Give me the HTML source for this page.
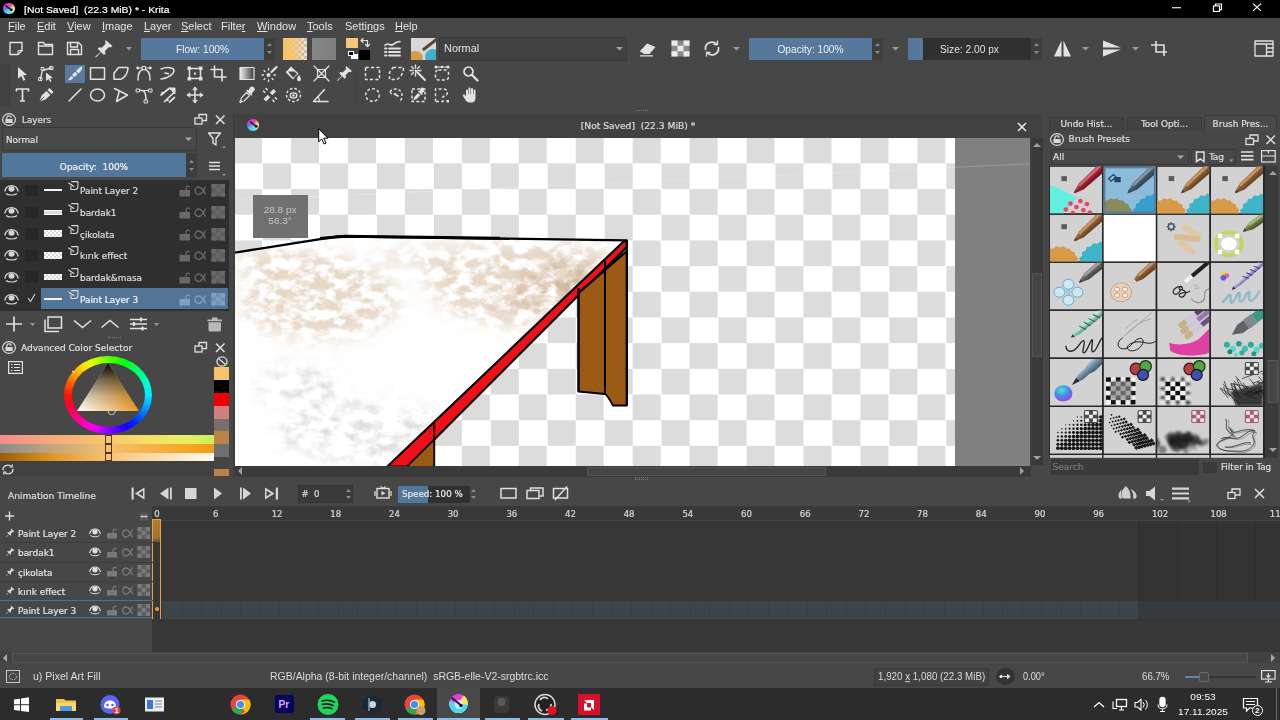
<!DOCTYPE html>
<html lang="en">
<head>
<meta charset="utf-8">
<title>[Not Saved] (22.3 MiB) * - Krita</title>
<style>
*{box-sizing:border-box;margin:0;padding:0}
html,body{width:1280px;height:720px;overflow:hidden;background:#474747}
body{position:relative;font-family:"Liberation Sans",sans-serif;font-size:11px;color:#dedede}
.abs,.abs>*{position:absolute}
.a{position:absolute}
.dj{font-family:"DejaVu Sans","Liberation Sans",sans-serif}
.dc{font-family:"DejaVu Sans Condensed","DejaVu Sans","Liberation Sans",sans-serif;-webkit-text-stroke:.25px}
svg{position:absolute;overflow:visible}
.t{position:absolute;white-space:nowrap;line-height:1}
#titlebar{left:0;top:0;width:1280px;height:18px;background:#000}
#menubar{left:0;top:18px;width:1280px;height:18px;background:#474747}
#menubar span{position:absolute;top:2px;font-size:11.5px;color:#e4e4e4;white-space:nowrap;transform-origin:0 0;transform:scaleX(.955)}
.slider{background:#55789c;border-radius:1px}
.dark{background:#2f2f2f}
</style>
</head>
<body>
<!-- ===== TITLE BAR ===== -->
<div id="titlebar" class="a">
  <div class="a" style="left:3px;top:3.200px;width:11.500px;height:11.200px;border-radius:50%;background:conic-gradient(from -60deg,#e040d0,#f040c0 25%,#f8e860 38%,#f0f0a0 48%,#60e8f0 60%,#40c8f0 80%,#8060e0 92%,#e040d0)"></div><svg style="left:3px;top:3.200px" width="12" height="12"><path d="M2.500 2.500l6 4.500" stroke="#28204c" stroke-width="1.700"/><circle cx="8.400" cy="6.800" r="1.400" fill="#181830"/></svg>
  <div class="t" style="left:24px;top:4.500px;font-size:10.400px;color:#fff;-webkit-text-stroke:.2px;transform-origin:0 0;transform:scaleY(.96)">[Not Saved]&nbsp; (22.3 MiB) * - Krita</div>
  <svg style="left:1170px;top:-.9px;transform-origin:0 0;transform:scaleY(.92)" width="100" height="18" viewBox="0 0 100 18" fill="none" stroke="#fff" stroke-width="1.2"><path d="M2 9.5h9"/><rect x="43.500" y="7.500" width="6" height="6"/><path d="M45.500 7.500v-2h6v6h-2"/><path d="M83 5l8 8M91 5l-8 8"/></svg>
</div>
<!-- ===== MENU BAR ===== -->
<div id="menubar" class="a">
  <span style="left:8px"><u>F</u>ile</span><span style="left:37px"><u>E</u>dit</span><span style="left:67px"><u>V</u>iew</span><span style="left:102px"><u>I</u>mage</span><span style="left:144px"><u>L</u>ayer</span><span style="left:181px"><u>S</u>elect</span><span style="left:221px">Filte<u>r</u></span><span style="left:257px"><u>W</u>indow</span><span style="left:307px"><u>T</u>ools</span><span style="left:345px">Setti<u>n</u>gs</span><span style="left:395px"><u>H</u>elp</span>
</div>
<!-- TOOLBAR -->
<div id="toolbar" class="a" style="left:0;top:36px;width:1280px;height:74px">
  <!-- sliders / boxes row 1 -->
  <div class="a slider" style="left:141px;top:2px;width:123px;height:22px"></div>
  <div class="t" style="left:141px;top:8px;width:123px;text-align:center;font-size:11.5px;color:#f0f0f0;transform:scaleX(.885)">Flow: 100%</div>
  <div class="a" style="left:264px;top:2px;width:11px;height:22px;background:#3e3e3e"></div>
  <div class="a" style="left:283px;top:2px;width:24px;height:22px;background:#ececec;background-image:conic-gradient(#bdbdbd 25%,#0000 0 50%,#bdbdbd 0 75%,#0000 0);background-size:6px 6px;"></div>
  <div class="a" style="left:283px;top:2px;width:24px;height:22px;background:linear-gradient(90deg,#f5c46c 28%,#f5c46caa 60%,#f5c46c22)"></div>
  <div class="a" style="left:312px;top:2px;width:24px;height:22px;background:linear-gradient(90deg,#868686,#7e7e7e)"></div>
  <div class="a" style="left:358.500px;top:13.500px;width:11.500px;height:10px;background:#000"></div>
  <div class="a" style="left:346px;top:1.500px;width:11.500px;height:10.500px;background:#f6c674"></div>
  <div class="a" style="left:351px;top:17.500px;width:6.500px;height:5.500px;background:#fff"></div>
  <div class="a" style="left:347.500px;top:14.500px;width:6.500px;height:5.500px;background:#000;border:1px solid #fff"></div>
  <div class="a" style="left:411px;top:2px;width:25px;height:22px;background:#d8d8d8;overflow:hidden"><div class="a" style="left:-4px;top:13px;width:16px;height:14px;border-radius:50%;background:#d99a4c"></div><div class="a" style="left:14px;top:11px;width:16px;height:16px;border-radius:50%;background:#3fb1cf"></div><div class="a" style="left:10px;top:5px;width:18px;height:3px;background:#5a4630;transform:rotate(-38deg)"></div></div>
  <div class="a" style="left:439px;top:1px;width:188px;height:24px;background:#414141;border:1px solid #383838;border-radius:2px"></div>
  <div class="t" style="left:444px;top:7px;font-size:11.5px;color:#e4e4e4;transform-origin:0 0;transform:scaleX(.95)">Normal</div>
  <div class="a slider" style="left:749px;top:2px;width:123px;height:22px"></div>
  <div class="t" style="left:749px;top:8px;width:123px;text-align:center;font-size:11.5px;color:#f0f0f0;transform:scaleX(.885)">Opacity: 100%</div>
  <div class="a" style="left:872px;top:2px;width:11px;height:22px;background:#3e3e3e"></div>
  <div class="a" style="left:908px;top:2px;width:123px;height:22px;background:#303030"></div>
  <div class="a slider" style="left:908px;top:2px;width:15px;height:22px"></div>
  <div class="t" style="left:908px;top:8px;width:123px;text-align:center;font-size:11.5px;color:#e0e0e0;transform:scaleX(.885)">Size: 2.00 px</div>
  <div class="a" style="left:1031px;top:2px;width:11px;height:22px;background:#3e3e3e"></div>
  <!-- selected tool bg -->
  <div class="a" style="left:65px;top:29px;width:20px;height:18px;background:#5a7a9c"></div>
  <!-- grip -->
  <div class="a" style="left:0;top:28px;width:10px;height:42px;background:#424242;border-right:1px solid #3c3c3c"></div>
  <div class="a" style="left:355px;top:30px;width:1px;height:40px;background:#404040"></div>
  <svg id="tbicons" style="left:0;top:0" width="1280" height="74" viewBox="0 36 1280 74" fill="none" stroke="#e2e2e2" stroke-width="1.4" stroke-linecap="round" stroke-linejoin="round">
<defs><linearGradient id="gtool"><stop offset="0" stop-color="#f0f0f0"/><stop offset="1" stop-color="#3a3a3a"/></linearGradient></defs>
<!-- row1 -->
<g transform="translate(16,48.500)"><path d="M-6-6h12v8l-4 4h-8z"/><path d="M6 2h-4v4" stroke-width="1"/></g>
<g transform="translate(45.500,48.500)"><path d="M-7 6v-12h5l1.500 2h7.500v10z"/><path d="M-7-2.500h14" /></g>
<g transform="translate(74.500,48.500)"><path d="M-7-6h11l3 3v9h-14z"/><path d="M-4-6v4.500h7v-4.500M-4 6v-5h8v5"/></g>
<g transform="translate(104.500,48)" stroke="none" fill="#e2e2e2"><path d="M1-8l7 6-2 1.500-1.500-.5-4 4 .5 2.500-1.500 1.500-3-3-5 5.500-.8-.8 5.500-5-3-3 1.500-1.500 2.500.5 4-4-.5-1.500z"/></g>
<path d="M126 47h6l-3 3.500z" fill="#9a9a9a" stroke="none"/>
<!-- spin arrows -->
<g fill="#8c8c8c" stroke="none"><path d="M267 46l2.500-3 2.500 3zM267 51l2.500 3 2.500-3z"/><path d="M875 46l2.500-3 2.500 3zM875 51l2.500 3 2.500-3z"/><path d="M1034 46l2.500-3 2.500 3zM1034 51l2.500 3 2.500-3z"/></g>
<!-- swap arrows near fg/bg -->
<path d="M361 40.500h6.500v6M361 40.500l2-2M361 40.500l2 2M367.500 46.500l-2-2M367.500 46.500l2-2" stroke-width="1.200"/>
<!-- brush settings -->
<g transform="translate(393,48.500)"><path d="M-8-3c3-4 5 1 8-1s4-3 7-3" stroke-width="1.600"/><path d="M-4 0h11M-4 3.500h11M-4 7h11" stroke-width="1.800"/><path d="M-8 0h1.500M-8 3.500h1.500M-8 7h1.500" stroke-width="1.800"/></g>
<path d="M616 47h7l-3.500 3.500z" fill="#a0a0a0" stroke="none"/>
<!-- row1 right -->
<g transform="translate(647.500,49)" fill="#e2e2e2" stroke="none"><path d="M-8 2.500l7.500-8 8.500 3.500-6 7h-6z"/><path d="M-7 6.800h12" stroke="#e2e2e2" stroke-width="1.200"/><path d="M-8 2.500l4 2.500" stroke="#474747" stroke-width=".8"/></g>
<g transform="translate(680.500,48.500)" stroke="none"><rect x="-9" y="-8" width="18" height="16" fill="#8a8a8a"/><path d="M-9-8h6v5.300h-6zM3-8h6v5.300h-6zM-3-2.700h6v5.400h-6zM-9 2.700h6v5.300h-6zM3 2.700h6v5.300h-6z" fill="#ececec"/></g>
<g transform="translate(712,48.500)" stroke-width="1.700"><path d="M-6.500 1a6.500 6.500 0 0 1 11-5.500"/><path d="M6.500-1a6.500 6.500 0 0 1-11 5.500"/><path d="M5.500-7.500v3.500h-3.500M-5.500 7.500v-3.500h3.500" stroke-width="1.300"/></g>
<g fill="#9a9a9a" stroke="none"><path d="M733 47h7l-3.500 3.500zM892 47h7l-3.500 3.500zM1082 47h7l-3.500 3.500zM1132 47h7l-3.500 3.500z"/></g>
<g transform="translate(1062.500,48.500)" fill="#e2e2e2" stroke="none"><path d="M-1-8v16h-7.500zM1-8v16h7.500z"/></g>
<g transform="translate(1112,48.500)" fill="#e2e2e2" stroke="none"><path d="M-9-8l18 7h-18zM-9 8l18-7h-18z" /></g>
<g transform="translate(1159,48.500)" stroke-width="1.600" stroke-linecap="butt"><path d="M-8-3.500h13v11M-3-7.500v11h11"/></g>
<g transform="translate(1264,48.500)" stroke-width="1.300"><rect x="-9" y="-7.500" width="18" height="15"/><path d="M-9-4.500h18M2.500-4.500v12M2.500-.5h6.500M2.500 3.500h6.500" /></g>
<!-- ROW 2 -->
<g transform="translate(22.500,73.500)" fill="#e2e2e2" stroke="none"><path d="M-4.500-6.500l9 8-4 .3 2.300 4.500-1.800.9-2.300-4.600-3.200 2.700z"/></g>
<g transform="translate(46,73.500)"><path d="M-5.500 5.500l1.800-8.500l9-2.500" stroke-width="1.300"/><rect x="-7" y="4" width="3" height="3" stroke-width="1"/><rect x="4" y="-7" width="3" height="3" stroke-width="1"/><rect x="-4.500" y="-6" width="2.500" height="2.500" stroke-width="1"/><path d="M0-1l7 5.500-3 .3 1.500 3-1.400.7-1.500-3-2.600 2z" fill="#e2e2e2" stroke="none"/></g>
<g transform="translate(75,73.500)" fill="#dbe6ef" stroke="none"><path d="M7-7c1 1.500-1 5-3.500 7l-2.500-2.500c2-2.500 5-5 6-4.500z"/><path d="M.2-1.700l2.300 2.300c-1 1.500-2.500 2.500-3.500 3l-1.800-1.800c.5-1.200 1.800-2.700 3-3.500z"/><path d="M-3.500 2.500l1.800 1.800c-1 2-3.800 2.700-5.800 2.500 1.500-.8 2-2.800 4-4.300z"/></g>
<g transform="translate(97.500,73.500)"><rect x="-7" y="-5.700" width="14" height="11.500" stroke-width="1.500"/></g>
<g transform="translate(121,73.500)"><path d="M-2.500-6h9.500c0 5-2 9-7 11.800h-7v-6z" stroke-width="1.500"/></g>
<g transform="translate(144,73.500)"><path d="M-6 6.500c0-6 2-10.500 6-10.500s6 4.500 6 10.500" stroke-width="1.500"/><path d="M-5.500-5.500h11" stroke-width="1"/><rect x="-1.500" y="-7" width="3" height="3" fill="#474747" stroke-width="1"/><rect x="-7.500" y="-6.800" width="2.500" height="2.500" fill="#e2e2e2" stroke="none"/><rect x="5" y="-6.800" width="2.500" height="2.500" fill="#e2e2e2" stroke="none"/></g>
<g transform="translate(167.500,73.500)"><path d="M-6.500-4.500c7-3 13-1 13 1.500 0 3.500-6 8-13 8.500" stroke-width="1.500"/><path d="M-2.500-.5l3.500.8" stroke-width="1.500"/></g>
<g transform="translate(195,73.500)"><rect x="-5.500" y="-5" width="11" height="10" stroke-width="1.500"/><g fill="#e2e2e2" stroke="none"><rect x="-7.500" y="-7" width="3.500" height="3.500"/><rect x="4" y="-7" width="3.500" height="3.500"/><rect x="-7.500" y="3.500" width="3.500" height="3.500"/><rect x="4" y="3.500" width="3.500" height="3.500"/><rect x="-1" y="-1" width="2" height="2"/></g></g>
<g transform="translate(218.500,73.500)" stroke-linecap="butt"><path d="M-4-8v11.500h12M-8-4h11.500v12" stroke-width="1.600"/></g>
<g transform="translate(247,73.500)"><rect x="-7" y="-6" width="14" height="12" stroke-width="1.200" fill="url(#gtool)"/></g>
<g transform="translate(270,73.500)" stroke-width="1.300"><path d="M6.500-6.500l-5 5" stroke-width="2.200"/><circle cx="-1.500" cy="1.500" r="2" fill="#e2e2e2" stroke="none"/><path d="M-1.500-5v1.500M-1.500 6.500v1.500M-8 1.500h1.500M4 1.500h1.500M-6-3l1 1M3 6l-1-1M-6 6l1-1" stroke-dasharray="1.500 1.200"/></g>
<g transform="translate(293,73.500)" fill="#e2e2e2" stroke="none"><path d="M-2-7l7.500 7-5.500 5.500-7-7z"/><path d="M-5-2l6.500 0 2.500 2.500-4 4z" fill="#474747"/><path d="M6 1c1 2 2 3.500 2 4.700a2 2 0 0 1-4 0c0-1.200 1-2.700 2-4.700z"/><path d="M-6.500-1.500l6.500 6.500" stroke="#e2e2e2"/></g>
<g transform="translate(321.500,73.500)" stroke-width="1.200"><rect x="-4" y="-4" width="8" height="8"/><path d="M-7.500-7.500l3.500 3.500M7.500-7.500l-3.500 3.500M-7.500 7.500l3.500-3.500M7.500 7.500l-3.500-3.500M-3-3l6 6M3-3l-6 6"/></g>
<g transform="translate(345,73)" stroke="none" fill="#e2e2e2"><path d="M1-7l6 5-1.700 1.300-1.300-.5-3.500 3.500.5 2.200-1.300 1.300-2.600-2.600-4.400 4.800-.7-.7 4.800-4.400-2.600-2.600 1.300-1.300 2.200.5 3.500-3.500-.5-1.300z"/></g>
<g transform="translate(372.500,73.500)"><rect x="-7" y="-6" width="14" height="12" stroke-width="1.500" stroke-dasharray="3.200 2.200" stroke-linecap="butt"/></g>
<g transform="translate(396.500,73.500)"><path d="M-3.500-6h10.500c0 5-2 9-6.500 12h-7.500v-7z" stroke-width="1.500" stroke-dasharray="3.200 2.200" stroke-linecap="butt"/></g>
<g transform="translate(418.500,73.500)" stroke-width="1.400"><path d="M-3-3l9.500 9.500" stroke-width="2"/><path d="M-3-8.500v3M-3 2.500v-3M-8.500-3h3M2.500-3h-3M-7-7l2 2M1-7l-2 2M-7 1l2-2"/></g>
<g transform="translate(442,73.500)"><rect x="-6.500" y="-3.500" width="13" height="10" rx="3" stroke-width="1.500" stroke-dasharray="3 2.200" stroke-linecap="butt"/><path d="M-6-6.500h12" stroke-width="1"/><g fill="#e2e2e2" stroke="none"><circle cx="-6" cy="-6.500" r="1.600"/><circle cx="6" cy="-6.500" r="1.600"/><circle cx="0" cy="-6.500" r="1.300"/></g></g>
<g transform="translate(470.500,73.500)"><circle cx="-2" cy="-2" r="4.500" stroke-width="1.700"/><path d="M1.500 1.500l5.500 5.500" stroke-width="2.400"/></g>
<!-- ROW 3 -->
<g transform="translate(22.500,95)" stroke-linecap="butt"><path d="M-6-3.500v-2.500h12v2.500M0-6v12M-2.500 6h5" stroke-width="1.700"/></g>
<g transform="translate(46,95)" fill="#e2e2e2" stroke="none"><path d="M3.500-7l4 4-2 2-4-4zM.5-4l4 4-5 4.500-6 2 2-6z"/><path d="M-6.500 6.500l4.500-4.500" stroke="#474747" stroke-width="1"/></g>
<g transform="translate(75,95)"><path d="M-6 6l12-12" stroke-width="1.500"/></g>
<g transform="translate(97.500,95)"><ellipse cx="0" cy="0" rx="7" ry="6" stroke-width="1.500"/></g>
<g transform="translate(121,95)"><path d="M-6.500-6.500l13 6.500-11 6.500 2.500-9.500" stroke-width="1.500"/></g>
<g transform="translate(144,95)"><path d="M-6-4.500c6-1 8 1 8 10.500" stroke-width="1.500"/><path d="M-6-4.500h13" stroke-width="1"/><rect x="-7.500" y="-6" width="3" height="3" fill="#474747" stroke-width="1"/><rect x="5" y="-6" width="3" height="3" fill="#474747" stroke-width="1"/><rect x="0.500" y="5" width="3" height="3" fill="#474747" stroke-width="1"/></g>
<g transform="translate(167.500,95)" stroke-width="1.700"><path d="M-6.500 0l8-6.500M-3 6.500l9-8.500M2 7l5-4.500"/><path d="M2-7h5.500v5.500z" fill="#e2e2e2" stroke-width="1"/><circle cx="-5" cy="-2" r="1.200" fill="#e2e2e2" stroke="none"/><circle cx="0" cy="5" r="1.200" fill="#e2e2e2" stroke="none"/></g>
<g transform="translate(195,95)"><path d="M-7.500 0h15M0-7.500v15" stroke-width="1.500"/><path d="M-2-5.500l2-2.500 2 2.500zM-2 5.500l2 2.500 2-2.500zM-5.500-2l-2.500 2 2.500 2zM5.500-2l2.500 2-2.500 2z" fill="#e2e2e2" stroke-width=".8"/></g>
<g transform="translate(247,95)" fill="#e2e2e2" stroke="none"><path d="M3-7.500a2.500 2.500 0 0 1 4 3.500l-2.500 2.500 1 1-1.300 1.300-5-5 1.300-1.300 1 1z"/><path d="M-.5-2.500l3 3-5.500 5.500-2.500.5-1 1-.8-.8 1-1 .5-2.500z" fill="none" stroke="#e2e2e2" stroke-width="1.200"/></g>
<g transform="translate(270,95)" fill="#e2e2e2" stroke="none"><path d="M-6.500 4l10-10 2.500 2.500-10 10z"/><path d="M-6-4l2-2 10 10-2 2z" fill="#474747"/><path d="M-4-6.500l1.200 1.200M-6.500-4l1.200 1.200M4 6.500l-1.200-1.200M6.500 4l-1.200-1.200" stroke="#e2e2e2" stroke-width="1.600"/><circle cx="0" cy="0" r="1.300" fill="#474747"/></g>
<g transform="translate(293.500,95)"><ellipse cx="0" cy="0" rx="7" ry="6.500" stroke-width="1.500" stroke-dasharray="2.600 2" stroke-linecap="butt"/><ellipse cx="0" cy=".5" rx="3.300" ry="2.600" stroke-width="1.400"/><circle cx="0" cy=".5" r="1.200" fill="#e2e2e2" stroke="none"/></g>
<g transform="translate(321,95)"><path d="M-7.500 6.500h14.500M-7.500 6.500l11-12" stroke-width="1.500"/><path d="M-1.500 6a6 6 0 0 0-2-4.500" stroke-width="1.200"/></g>
<g transform="translate(372.500,95)"><ellipse cx="0" cy="0" rx="6.800" ry="6.300" stroke-width="1.500" stroke-dasharray="2.800 2.200" stroke-linecap="butt"/></g>
<g transform="translate(396.500,95)"><path d="M-6.500-3c2-4 9-4 11 0s1 8-2 9.500M-6.500-3c1 2 4 3 6 1.500" stroke-width="1.500" stroke-dasharray="2.800 2" stroke-linecap="butt"/><path d="M-2-1l3.500 2" stroke-width="1.700"/></g>
<g transform="translate(418.500,95)"><rect x="-6.500" y="-6" width="13" height="12.500" stroke-width="1.500" stroke-dasharray="3 2.200" stroke-linecap="butt"/><path d="M2-6.500a2 2 0 0 1 3.500 3l-2 2 .8.800-1 1-3.800-3.800 1-1 .8.800zM-.5-2l2.300 2.300-4 4-2 .5-.8.800-.6-.6.800-.8.500-2z" fill="#e2e2e2" stroke="none"/></g>
<g transform="translate(442,95)"><path d="M-6.500 6.500v-12.500h7.500c6 0 6 6 0 7.500v5h-7.500" stroke-width="1.500" stroke-dasharray="3 2.200" stroke-linecap="butt"/><rect x="4.500" y="5" width="2.500" height="2.500" fill="#e2e2e2" stroke="none"/></g>
<g transform="translate(470.500,95)" fill="#e2e2e2" stroke="none"><path d="M-4.500-4.500a1 1 0 0 1 2 0v3.500h.5v-5.500a1 1 0 0 1 2 0v5.500h.5v-5a1 1 0 0 1 2 0v5h.5v-3.500a1 1 0 0 1 2 0v7.500c0 3-1.500 4.500-4 4.500h-2c-2 0-3-1-4-2.500l-2.500-4a1.100 1.100 0 0 1 2-1l1 1.500z"/></g>
</svg>
</div>
<!-- LAYERS -->
<div id="layers" class="a dc" style="left:0;top:110px;width:232px;height:228px">
<svg style="left:2px;top:2.500px" width="14" height="13" viewBox="-7 -6.500 14 13" fill="none" stroke="#d8d8d8" stroke-width="1.200"><ellipse cx="0" cy="0" rx="6.400" ry="5.900"/><path d="M-2.200 -.5v-1.200a2.200 2 0 0 1 4.400 0" /><rect x="-3.600" y="-.5" width="7.200" height="4" fill="#d8d8d8" stroke="none"/></svg>
<div class="t" style="left:21.500px;top:5.500px;font-size:10px;color:#dcdcdc;transform-origin:0 0;transform:scale(.98,.88)">Layers</div>
<svg style="left:194px;top:3px" width="32" height="13" viewBox="194 113 32 13" fill="none" stroke="#e0e0e0" stroke-width="1.300"><rect x="195" y="118" width="7" height="6"/><path d="M199 118v-3.500h7.500v6h-4.500"/><path d="M216 115.500l8.500 8.500M224.500 115.500l-8.500 8.500" stroke-width="1.500"/></svg>
<div class="a" style="left:2px;top:17px;width:195px;height:24px;background:#484848;border:1px solid #3a3a3a;border-radius:2px"></div>
<div class="t" style="left:5.500px;top:26px;font-size:10px;color:#dcdcdc;transform-origin:0 0;transform:scale(.98,.88)">Normal</div>
<svg style="left:185px;top:27px" width="8" height="5"><path d="M0 .5h7l-3.500 3.500z" fill="#a8a8a8"/></svg>
<svg style="left:207px;top:21px" width="20" height="18" viewBox="207 131 20 18" fill="none" stroke="#e0e0e0" stroke-width="1.400" stroke-linejoin="round"><path d="M208.500 133h12l-4.500 5.500v6.500l-3-2v-4.500z"/><path d="M222 146.500h4l-2 2z" fill="#9a9a9a" stroke="none"/></svg>
<div class="a" style="left:2px;top:43px;width:184px;height:24px;background:#51779d"></div>
<div class="a" style="left:186px;top:43px;width:11px;height:24px;background:#3d3d3d"></div>
<svg style="left:188px;top:49px" width="8" height="14"><path d="M1 4l2.500-3 2.500 3zM1 9l2.500 3 2.500-3z" fill="#8a8a8a"/></svg>
<div class="t" style="left:2px;top:52.500px;width:184px;text-align:center;font-size:10px;color:#f0f0f0;transform-origin:50% 0;transform:scale(1,.88)">Opacity:&nbsp; 100%</div>
<svg style="left:208px;top:50px" width="20" height="16" viewBox="208 160 20 16" fill="none" stroke="#e0e0e0" stroke-width="1.600" stroke-linecap="butt"><path d="M209 162.500h11M209 166h11M209 169.500h11"/><path d="M222 174h4l-2 2z" fill="#9a9a9a" stroke="none"/></svg>
<div class="a" style="left:0;top:69.500px;width:228.500px;height:131px;background:#2f2f2f"></div>
<svg style="left:4px;top:73.3px" width="15" height="14" viewBox="-7.500 -7 15 14" fill="none" stroke="#d6d6d6" stroke-width="1.300"><path d="M-6.800 1.500c1-4 3.500-5.800 6.800-5.800s5.800 1.800 6.800 5.800" /><path d="M-5.500 3.500c2 2 9 2 11 0" stroke-width="1.100"/><ellipse cx="0" cy="-1" rx="3" ry="2.800" fill="#d6d6d6" stroke="none"/></svg>
<div class="a" style="left:25px;top:74.8px;width:12.500px;height:11.500px;background:#272727"></div>
<div class="a" style="left:44px;top:79.3px;width:18px;height:2px;background:#f4f4f4"></div>
<svg style="left:67.500px;top:71.3px" width="11" height="10" fill="none" stroke="#d8d8d8" stroke-width="1.100" stroke-linejoin="round"><path d="M3.200 .6H9.900V5.500Q9.900 8.500 7 8.500H2.900V4.800"/><path d="M.4 1.800L6.200 5.700" stroke-width="1.300"/></svg>
<div class="t" style="left:79.800px;top:77.4px;font-size:10px;color:#dcdcdc;transform-origin:0 0;transform:scale(.99,.88)">Paint Layer 2</div>
<svg style="left:179px;top:74.3px" width="48" height="13" viewBox="179 0 48 13" fill="none" stroke="#696969" stroke-width="1.300"><rect x="179.500" y="6" width="10.500" height="6.500" fill="#696969" stroke="none"/><path d="M186 6v-2a2 2 0 0 1 3.800-.8"/><path d="M205.500 2.500c-2 5-4 8-7 8a3 3.300 0 0 1 0-7.500c3 0 5 3 7 7.500" stroke-width="1.400"/><g stroke="none"><rect x="211.500" y="0" width="13.500" height="12.500" fill="#5e5e5e"/><path d="M211.500 0h4.500v4.200h-4.500zM220.500 0h4.500v4.200h-4.500zM216 4.200h4.500v4.200h-4.500zM211.500 8.400h4.500v4.100h-4.500zM220.500 8.400h4.500v4.100h-4.500z" fill="#696969"/></g></svg>
<svg style="left:4px;top:95.0px" width="15" height="14" viewBox="-7.500 -7 15 14" fill="none" stroke="#d6d6d6" stroke-width="1.300"><path d="M-6.800 1.500c1-4 3.500-5.800 6.800-5.800s5.800 1.800 6.800 5.800" /><path d="M-5.500 3.500c2 2 9 2 11 0" stroke-width="1.100"/><ellipse cx="0" cy="-1" rx="3" ry="2.800" fill="#d6d6d6" stroke="none"/></svg>
<div class="a" style="left:25px;top:96.5px;width:12.500px;height:11.500px;background:#272727"></div>
<div class="a" style="left:44px;top:99.5px;width:18px;height:5px;background:#dcdcdc;border-top:1.500px solid #fff;border-bottom:1px solid #fff"></div>
<svg style="left:67.500px;top:93.0px" width="11" height="10" fill="none" stroke="#d8d8d8" stroke-width="1.100" stroke-linejoin="round"><path d="M3.200 .6H9.900V5.500Q9.900 8.500 7 8.500H2.900V4.800"/><path d="M.4 1.800L6.200 5.700" stroke-width="1.300"/></svg>
<div class="t" style="left:79.800px;top:99.1px;font-size:10px;color:#dcdcdc;transform-origin:0 0;transform:scale(.99,.88)">bardak1</div>
<svg style="left:179px;top:96.0px" width="48" height="13" viewBox="179 0 48 13" fill="none" stroke="#696969" stroke-width="1.300"><rect x="179.500" y="6" width="10.500" height="6.500" fill="#696969" stroke="none"/><path d="M186 6v-2a2 2 0 0 1 3.800-.8"/><path d="M205.500 2.500c-2 5-4 8-7 8a3 3.300 0 0 1 0-7.500c3 0 5 3 7 7.500" stroke-width="1.400"/><g stroke="none"><rect x="211.500" y="0" width="13.500" height="12.500" fill="#5e5e5e"/><path d="M211.500 0h4.500v4.200h-4.500zM220.500 0h4.500v4.200h-4.500zM216 4.200h4.500v4.200h-4.500zM211.500 8.400h4.500v4.100h-4.500zM220.500 8.400h4.500v4.100h-4.500z" fill="#696969"/></g></svg>
<svg style="left:4px;top:116.6px" width="15" height="14" viewBox="-7.500 -7 15 14" fill="none" stroke="#d6d6d6" stroke-width="1.300"><path d="M-6.800 1.500c1-4 3.500-5.800 6.800-5.800s5.800 1.800 6.800 5.800" /><path d="M-5.500 3.500c2 2 9 2 11 0" stroke-width="1.100"/><ellipse cx="0" cy="-1" rx="3" ry="2.800" fill="#d6d6d6" stroke="none"/></svg>
<div class="a" style="left:25px;top:118.1px;width:12.500px;height:11.500px;background:#272727"></div>
<div class="a" style="left:44px;top:120.4px;width:18px;height:6.500px;background:#fff;background-image:conic-gradient(#d8d8d8 25%,#0000 0 50%,#d8d8d8 0 75%,#0000 0);background-size:4px 4px"></div>
<svg style="left:67.500px;top:114.6px" width="11" height="10" fill="none" stroke="#d8d8d8" stroke-width="1.100" stroke-linejoin="round"><path d="M3.200 .6H9.900V5.500Q9.900 8.500 7 8.500H2.900V4.800"/><path d="M.4 1.800L6.200 5.700" stroke-width="1.300"/></svg>
<div class="t" style="left:79.800px;top:120.7px;font-size:10px;color:#dcdcdc;transform-origin:0 0;transform:scale(.99,.88)">çikolata</div>
<svg style="left:179px;top:117.6px" width="48" height="13" viewBox="179 0 48 13" fill="none" stroke="#696969" stroke-width="1.300"><rect x="179.500" y="6" width="10.500" height="6.500" fill="#696969" stroke="none"/><path d="M186 6v-2a2 2 0 0 1 3.800-.8"/><path d="M205.500 2.500c-2 5-4 8-7 8a3 3.300 0 0 1 0-7.500c3 0 5 3 7 7.500" stroke-width="1.400"/><g stroke="none"><rect x="211.500" y="0" width="13.500" height="12.500" fill="#5e5e5e"/><path d="M211.500 0h4.500v4.200h-4.500zM220.500 0h4.500v4.200h-4.500zM216 4.200h4.500v4.200h-4.500zM211.500 8.400h4.500v4.100h-4.500zM220.500 8.400h4.500v4.100h-4.500z" fill="#696969"/></g></svg>
<svg style="left:4px;top:138.3px" width="15" height="14" viewBox="-7.500 -7 15 14" fill="none" stroke="#d6d6d6" stroke-width="1.300"><path d="M-6.800 1.500c1-4 3.500-5.800 6.800-5.800s5.800 1.800 6.800 5.800" /><path d="M-5.500 3.500c2 2 9 2 11 0" stroke-width="1.100"/><ellipse cx="0" cy="-1" rx="3" ry="2.800" fill="#d6d6d6" stroke="none"/></svg>
<div class="a" style="left:25px;top:139.8px;width:12.500px;height:11.500px;background:#272727"></div>
<div class="a" style="left:44px;top:142.1px;width:18px;height:6.500px;background:#fff;background-image:conic-gradient(#d8d8d8 25%,#0000 0 50%,#d8d8d8 0 75%,#0000 0);background-size:4px 4px"></div>
<svg style="left:67.500px;top:136.3px" width="11" height="10" fill="none" stroke="#d8d8d8" stroke-width="1.100" stroke-linejoin="round"><path d="M3.200 .6H9.900V5.500Q9.900 8.500 7 8.500H2.900V4.800"/><path d="M.4 1.800L6.200 5.700" stroke-width="1.300"/></svg>
<div class="t" style="left:79.800px;top:142.4px;font-size:10px;color:#dcdcdc;transform-origin:0 0;transform:scale(.99,.88)">kırık effect</div>
<svg style="left:179px;top:139.3px" width="48" height="13" viewBox="179 0 48 13" fill="none" stroke="#696969" stroke-width="1.300"><rect x="179.500" y="6" width="10.500" height="6.500" fill="#696969" stroke="none"/><path d="M186 6v-2a2 2 0 0 1 3.800-.8"/><path d="M205.500 2.500c-2 5-4 8-7 8a3 3.300 0 0 1 0-7.500c3 0 5 3 7 7.500" stroke-width="1.400"/><g stroke="none"><rect x="211.500" y="0" width="13.500" height="12.500" fill="#5e5e5e"/><path d="M211.500 0h4.500v4.200h-4.500zM220.500 0h4.500v4.200h-4.500zM216 4.200h4.500v4.200h-4.500zM211.500 8.400h4.500v4.100h-4.500zM220.500 8.400h4.500v4.100h-4.500z" fill="#696969"/></g></svg>
<svg style="left:4px;top:159.9px" width="15" height="14" viewBox="-7.500 -7 15 14" fill="none" stroke="#d6d6d6" stroke-width="1.300"><path d="M-6.800 1.500c1-4 3.500-5.800 6.800-5.800s5.800 1.800 6.800 5.800" /><path d="M-5.500 3.500c2 2 9 2 11 0" stroke-width="1.100"/><ellipse cx="0" cy="-1" rx="3" ry="2.800" fill="#d6d6d6" stroke="none"/></svg>
<div class="a" style="left:25px;top:161.4px;width:12.500px;height:11.500px;background:#272727"></div>
<div class="a" style="left:44px;top:163.7px;width:18px;height:6.500px;background:#fff;background-image:conic-gradient(#d8d8d8 25%,#0000 0 50%,#d8d8d8 0 75%,#0000 0);background-size:4px 4px"></div>
<svg style="left:67.500px;top:157.9px" width="11" height="10" fill="none" stroke="#d8d8d8" stroke-width="1.100" stroke-linejoin="round"><path d="M3.200 .6H9.900V5.500Q9.900 8.500 7 8.500H2.900V4.800"/><path d="M.4 1.800L6.200 5.700" stroke-width="1.300"/></svg>
<div class="t" style="left:79.800px;top:164.0px;font-size:10px;color:#dcdcdc;transform-origin:0 0;transform:scale(.99,.88)">bardak&amp;masa</div>
<svg style="left:179px;top:160.9px" width="48" height="13" viewBox="179 0 48 13" fill="none" stroke="#696969" stroke-width="1.300"><rect x="179.500" y="6" width="10.500" height="6.500" fill="#696969" stroke="none"/><path d="M186 6v-2a2 2 0 0 1 3.800-.8"/><path d="M205.500 2.500c-2 5-4 8-7 8a3 3.300 0 0 1 0-7.500c3 0 5 3 7 7.500" stroke-width="1.400"/><g stroke="none"><rect x="211.500" y="0" width="13.500" height="12.500" fill="#5e5e5e"/><path d="M211.500 0h4.500v4.200h-4.500zM220.500 0h4.500v4.200h-4.500zM216 4.200h4.500v4.200h-4.500zM211.500 8.400h4.500v4.100h-4.500zM220.500 8.400h4.500v4.100h-4.500z" fill="#696969"/></g></svg>
<div class="a" style="left:40.500px;top:178.3px;width:187.500px;height:21px;background:#527496"></div>
<svg style="left:27px;top:183.1px" width="9" height="10" fill="none" stroke="#d0d0d0" stroke-width="1.200"><path d="M1 5l2.500 3.500 4.500-7.500"/></svg>
<svg style="left:4px;top:181.6px" width="15" height="14" viewBox="-7.500 -7 15 14" fill="none" stroke="#d6d6d6" stroke-width="1.300"><path d="M-6.800 1.500c1-4 3.500-5.800 6.800-5.800s5.800 1.800 6.800 5.800" /><path d="M-5.500 3.500c2 2 9 2 11 0" stroke-width="1.100"/><ellipse cx="0" cy="-1" rx="3" ry="2.800" fill="#d6d6d6" stroke="none"/></svg>
<div class="a" style="left:44px;top:187.6px;width:18px;height:2px;background:#f4f4f4"></div>
<svg style="left:67.500px;top:179.6px" width="11" height="10" fill="none" stroke="#d8d8d8" stroke-width="1.100" stroke-linejoin="round"><path d="M3.200 .6H9.900V5.500Q9.900 8.500 7 8.500H2.900V4.800"/><path d="M.4 1.800L6.200 5.700" stroke-width="1.300"/></svg>
<div class="t" style="left:79.800px;top:185.7px;font-size:10px;color:#f2f2f2;transform-origin:0 0;transform:scale(.99,.88)">Paint Layer 3</div>
<svg style="left:179px;top:182.6px" width="48" height="13" viewBox="179 0 48 13" fill="none" stroke="#7fa0c0" stroke-width="1.300"><rect x="179.500" y="6" width="10.500" height="6.500" fill="#7fa0c0" stroke="none"/><path d="M186 6v-2a2 2 0 0 1 3.800-.8"/><path d="M205.500 2.500c-2 5-4 8-7 8a3 3.300 0 0 1 0-7.500c3 0 5 3 7 7.500" stroke-width="1.400"/><g stroke="none"><rect x="211.500" y="0" width="13.500" height="12.500" fill="#6f93b8"/><path d="M211.500 0h4.500v4.200h-4.500zM220.500 0h4.500v4.200h-4.500zM216 4.200h4.500v4.200h-4.500zM211.500 8.400h4.500v4.100h-4.500zM220.500 8.400h4.500v4.100h-4.500z" fill="#7fa0c0"/></g></svg>
<div class="a" style="left:228.500px;top:69.500px;width:3.500px;height:131px;background:#444"></div>
<svg style="left:0;top:203px" width="232" height="25" viewBox="0 313 232 25" fill="none" stroke="#e2e2e2" stroke-width="1.700" stroke-linecap="butt"><path d="M6 324h16M14 316.500v15"/><path d="M30 323h5l-2.500 3z" fill="#9a9a9a" stroke="none"/><path d="M48 317h13.500v11h-13.500z" stroke-width="1.500"/><path d="M45 319.500v12h14" stroke-width="1.500"/><path d="M74 320.500l8.500 7 8.500-7" stroke-width="1.600"/><path d="M101.500 327.500l8.500-7 8.500 7" stroke-width="1.600"/><path d="M130 319.500h17M130 324h17M130 328.500h17" stroke-width="1.500"/><path d="M141 317.500v4M134 322v4M142.500 326.500v4" stroke-width="2"/><path d="M154 323h5l-2.500 3z" fill="#9a9a9a" stroke="none"/><g fill="#b8b8b8" stroke="none"><path d="M207.500 319.500h14.500v1.800h-14.500zM212 317.500h5.500v2h-5.500zM208.500 322.300h12.500v7.700a1.500 1.500 0 0 1-1.500 1.500h-9.500a1.500 1.500 0 0 1-1.500-1.500z"/></g></svg>
<div class="a" style="left:108px;top:226.500px;width:13px;height:1px;background:repeating-linear-gradient(90deg,#7a7a7a 0 1px,#0000 1px 2px)"></div>
</div>
<!-- COLOR -->
<div id="colorsel" class="a dc" style="left:0;top:338px;width:232px;height:142px">
  <svg style="left:2px;top:2.500px" width="14" height="13" viewBox="-7 -6.500 14 13" fill="none" stroke="#d8d8d8" stroke-width="1.200"><ellipse cx="0" cy="0" rx="6.400" ry="5.900"/><path d="M-2.200 -.5v-1.200a2.200 2 0 0 1 4.400 0"/><rect x="-3.600" y="-.5" width="7.200" height="4" fill="#d8d8d8" stroke="none"/></svg>
  <div class="t" style="left:21.300px;top:5.800px;font-size:10px;color:#dcdcdc;transform-origin:0 0;transform:scale(1.005,.88)">Advanced Color Selector</div>
  <svg style="left:194px;top:3px" width="32" height="13" viewBox="194 113 32 13" fill="none" stroke="#e0e0e0" stroke-width="1.300"><rect x="195" y="118" width="7" height="6"/><path d="M199 118v-3.500h7.500v6h-4.500"/><path d="M216 115.500l8.500 8.500M224.500 115.500l-8.500 8.500" stroke-width="1.500"/></svg>
  <!-- config icon -->
  <svg style="left:7.500px;top:23px" width="15" height="13" fill="none" stroke="#e0e0e0" stroke-width="1.200"><rect x=".6" y=".6" width="13.800" height="11.800"/><path d="M3 3.500h1.500M6 3.500h6M3 6.500h1.500M6 6.500h6M3 9.500h1.500M6 9.500h6"/></svg>
  <!-- hue ring: 88 x 78 ellipse centered at (108,394.5) -> local (108,56.500) -->
  <div class="a" style="left:64px;top:17.500px;width:88px;height:78px;border-radius:50%;background:conic-gradient(from 0deg,#6aff00 0.0%,#2aff00 4.2%,#00ff15 8.3%,#00ff55 12.5%,#00ff94 16.7%,#00ffd4 20.8%,#00e9ff 25.0%,#00a9ff 29.2%,#006aff 33.3%,#002aff 37.5%,#1500ff 41.7%,#5500ff 45.8%,#9400ff 50.0%,#d400ff 54.2%,#ff00e9 58.3%,#ff00a9 62.5%,#ff006a 66.7%,#ff002a 70.8%,#ff1500 75.0%,#ff5500 79.2%,#ff9400 83.3%,#ffd400 87.5%,#e9ff00 91.7%,#a9ff00 95.8%,#6aff00 100.0%)"></div>
  <div class="a" style="left:71.500px;top:24.500px;width:73px;height:64px;border-radius:50%;background:#474747"></div>
  <!-- triangle -->
  <svg style="left:64px;top:17px" width="90" height="80" viewBox="64 355 90 80"><defs><linearGradient id="tg1" x1="77" y1="411" x2="139" y2="411" gradientUnits="userSpaceOnUse"><stop offset="0" stop-color="#ffffff"/><stop offset="1" stop-color="#ef9b1c"/></linearGradient><linearGradient id="tg2" x1="108" y1="363" x2="108" y2="411" gradientUnits="userSpaceOnUse"><stop offset="0" stop-color="#000" stop-opacity="1"/><stop offset=".35" stop-color="#000" stop-opacity=".52"/><stop offset=".7" stop-color="#000" stop-opacity=".17"/><stop offset="1" stop-color="#000" stop-opacity="0"/></linearGradient></defs><path d="M108 363L139 411H77z" fill="url(#tg1)"/><path d="M108 363L139 411H77z" fill="url(#tg2)"/><circle cx="111.700" cy="411" r="3.600" fill="none" stroke="#c8c8c8" stroke-width="1"/><path d="M72 371l3 2" stroke="#fff" stroke-width="1"/></svg>
  <!-- no color icon -->
  <svg style="left:215.500px;top:17.500px" width="12" height="11" fill="none" stroke="#dcdcdc" stroke-width="1.400"><ellipse cx="6" cy="5.500" rx="5" ry="4.600"/><path d="M2.500 2.500l7 6"/></svg>
  <!-- history strip -->
  <div class="a" style="left:214px;top:29px;width:14.500px;height:13px;background:#f5c36e"></div>
  <div class="a" style="left:214px;top:42px;width:14.500px;height:13px;background:#000"></div>
  <div class="a" style="left:214px;top:55px;width:14.500px;height:13px;background:#f00000"></div>
  <div class="a" style="left:214px;top:68px;width:14.500px;height:13px;background:#cf7f7f"></div>
  <div class="a" style="left:214px;top:81px;width:14.500px;height:12px;background:#7b7068"></div>
  <div class="a" style="left:214px;top:93px;width:14.500px;height:13px;background:#b9834a"></div>
  <div class="a" style="left:214px;top:106px;width:14.500px;height:13px;background:#6f6f6f"></div>
  <div class="a" style="left:214px;top:119px;width:14.500px;height:12px;background:#454545"></div>
  <div class="a" style="left:214px;top:131px;width:14.500px;height:7px;background:#b9834a"></div>
  <!-- bars -->
  <div class="a" style="left:0;top:96.500px;width:214px;height:9px;background:linear-gradient(90deg,#f48c8a,#f6a67c 22%,#f7c46e 47%,#f6e066 70%,#e6f05e 88%,#c8f05a)"></div>
  <div class="a" style="left:0;top:105.500px;width:214px;height:9px;background:linear-gradient(90deg,#8c8c8c,#c2a67e 25%,#f6c070 50%,#f6ae40 75%,#f59c10)"></div>
  <div class="a" style="left:0;top:114.500px;width:214px;height:8.500px;background:linear-gradient(90deg,#9a5e00,#e0982c 25%,#f6c470 50%,#fbe2b8 78%,#fffaf0)"></div>
  <div class="a" style="left:104.500px;top:96.500px;width:7.500px;height:9px;background:#f7c46e;border:1px solid #503818"></div>
  <div class="a" style="left:104.500px;top:105.500px;width:7.500px;height:9px;background:#f6c070;border:1px solid #503818"></div>
  <div class="a" style="left:104.500px;top:114.500px;width:7.500px;height:8.500px;background:#f6c470;border:1px solid #503818"></div>
  <!-- bottom strip -->
  <div class="a" style="left:0;top:123px;width:214px;height:15px;background:#404040"></div>
  <svg style="left:2px;top:126px" width="12" height="11" viewBox="-6 -5.500 12 11" fill="none" stroke="#dcdcdc" stroke-width="1.300"><path d="M-4.800 .8a4.800 4.300 0 0 1 8.200-3.800"/><path d="M4.800-.8a4.800 4.300 0 0 1-8.200 3.800"/><path d="M4.300-5.300v2.800h-2.800M-4.300 5.300v-2.800h2.800" stroke-width="1.100"/></svg>
</div>
<!-- CANVAS -->
<div id="canvaswrap" class="a" style="left:233px;top:114px;width:812px;height:364px">
  <!-- tab bar -->
  <div class="a" style="left:2.800px;top:-.5px;width:806px;height:24.500px;background:#414141"></div>
  <div class="a" style="left:0;top:0;width:2px;height:364px;background:#3e3e3e"></div>
  <div class="a" style="left:13.500px;top:5px;width:12.500px;height:12px;border-radius:50%;background:conic-gradient(from -60deg,#e040d0,#f040c0 25%,#f8e860 38%,#f0f0a0 48%,#60e8f0 60%,#40c8f0 80%,#8060e0 92%,#e040d0)"></div><svg style="left:13.500px;top:5px" width="13" height="12"><path d="M3 2.500l6.500 5" stroke="#28204c" stroke-width="1.800"/><circle cx="9.200" cy="7.300" r="1.500" fill="#181830"/></svg>
  <div class="t dc" style="left:304.800px;top:7.500px;width:200px;text-align:center;font-size:10px;color:#d8d8d8;transform-origin:50% 0;transform:scale(1.014,.88)">[Not Saved]&nbsp; (22.3 MiB) *</div>
  <svg style="left:784px;top:8px" width="10" height="10" stroke="#e8e8e8" stroke-width="1.600"><path d="M1 1l8 8M9 1l-8 8"/></svg>
  <!-- canvas area -->
  <div class="a" style="left:1.600px;top:24px;width:795.400px;height:327.500px;background:#808080;overflow:hidden">
    <div class="a" style="left:0;top:0;width:720.400px;height:327.500px;background-color:#fff;background-image:conic-gradient(#fff 25%,#dcdcdc 0 50%,#fff 0 75%,#dcdcdc 0);background-size:56.940px 51.360px;background-position:-.900px -.300px"></div>
    <svg style="left:.400px;top:0" width="796" height="327" viewBox="235 138 796 327">
      <defs>
        <clipPath id="tblclip"><path d="M235 252.600L337.700 236.300L626 240.400L388 466.500H235z"/></clipPath>
        <filter id="cloud" filterUnits="userSpaceOnUse" x="235" y="230" width="400" height="240"><feTurbulence type="fractalNoise" baseFrequency="0.07 0.1" numOctaves="5" seed="11" result="n"/><feColorMatrix in="n" type="matrix" values="0 0 0 0 0.800  0 0 0 0 0.690  0 0 0 0 0.580  4.200 0 0 0 -1.600"/></filter>
        <filter id="cloud2" filterUnits="userSpaceOnUse" x="235" y="230" width="400" height="240"><feTurbulence type="fractalNoise" baseFrequency="0.07 0.1" numOctaves="5" seed="23" result="n"/><feColorMatrix in="n" type="matrix" values="0 0 0 0 0.640  0 0 0 0 0.480  0 0 0 0 0.340  3.400 0 0 0 -1.350"/></filter>
        <filter id="cloudg" filterUnits="userSpaceOnUse" x="235" y="230" width="400" height="240"><feTurbulence type="fractalNoise" baseFrequency="0.06 0.09" numOctaves="5" seed="3" result="n"/><feColorMatrix in="n" type="matrix" values="0 0 0 0 0.740  0 0 0 0 0.730  0 0 0 0 0.720  3 0 0 0 -1.300"/></filter>
        <filter id="blur8" filterUnits="userSpaceOnUse" x="200" y="200" width="480" height="300"><feGaussianBlur stdDeviation="10"/></filter>
        <mask id="mB" maskUnits="userSpaceOnUse" x="235" y="230" width="400" height="240"><g filter="url(#blur8)" fill="#fff"><ellipse cx="320" cy="300" rx="80" ry="40"/><ellipse cx="530" cy="282" rx="105" ry="44"/><ellipse cx="290" cy="262" rx="60" ry="14"/><ellipse cx="480" cy="256" rx="110" ry="10"/></g></mask>
        <mask id="mB2" maskUnits="userSpaceOnUse" x="235" y="230" width="400" height="240"><g filter="url(#blur8)" fill="#fff"><ellipse cx="565" cy="282" rx="42" ry="22"/><ellipse cx="520" cy="300" rx="30" ry="12"/></g></mask>
        <mask id="mG" maskUnits="userSpaceOnUse" x="235" y="230" width="400" height="240"><g filter="url(#blur8)" fill="#fff"><ellipse cx="360" cy="432" rx="85" ry="32"/><ellipse cx="300" cy="385" rx="45" ry="20"/></g></mask>
        <radialGradient id="rgA"><stop offset="0" stop-color="#fff" stop-opacity="1"/><stop offset="1" stop-color="#fff" stop-opacity="0"/></radialGradient>
      </defs>
      <path d="M235 200.300L1031 163.800" stroke="#fff" stroke-opacity=".22" stroke-width="1" fill="none"/>
      <!-- table top -->
      <path d="M235 252.600L337.700 236.300L626 240.400L388 466.500H235z" fill="#fff"/>
      <g clip-path="url(#tblclip)">
        <rect x="235" y="230" width="400" height="240" filter="url(#cloud)" mask="url(#mB)"/>
        <rect x="235" y="230" width="400" height="240" filter="url(#cloud2)" mask="url(#mB2)"/>
        <rect x="235" y="230" width="400" height="240" filter="url(#cloudg)" mask="url(#mG)"/>
      </g>
      <!-- red band -->
      <path d="M623.600 241.500L626.800 240.500V247L407.300 466.500H387.300z" fill="#f01018" stroke="#000" stroke-width="2.200" stroke-linejoin="round"/>
      <!-- bottom leg -->
      <path d="M434.200 441V466.500H408.500z" fill="#9b5b14"/>
      <path d="M434.200 421.500V466.500" stroke="#1a0a00" stroke-width="2"/>
      <!-- right leg -->
      <path d="M578.500 293L626.800 251V405.500H613C610 400 607 395 605 394L578.500 391.500z" fill="#9b5b14" stroke="#000" stroke-width="1.800" stroke-linejoin="round"/>
      <path d="M578.500 293L626.800 251" stroke="#000" stroke-width="2.200"/>
      <path d="M626.800 241V405.500" stroke="#000" stroke-width="2.200"/>
      <path d="M578.500 288V391.500" stroke="#000" stroke-width="2.200"/>
      <path d="M605 260.500V394" stroke="#000" stroke-width="2"/>
      <!-- top outline -->
      <path d="M235 252.600L337.700 236.300L626.500 240.400" fill="none" stroke="#000" stroke-width="2.300" stroke-linejoin="round"/>
      <path d="M320 238.500L345 236.300L500 238.300" fill="none" stroke="#000" stroke-width="3" stroke-linejoin="round"/>
    </svg>
    <!-- info box -->
    <div class="a" style="left:18px;top:57px;width:55px;height:42.500px;background:#6b6b6b;opacity:.96"></div>
    <div class="t" style="left:18px;top:67px;width:55px;text-align:center;font-size:10px;line-height:11.500px;color:#c4c4c4;white-space:normal;transform-origin:50% 0;transform:scale(1,.92)">28.8 px<br>56.3°</div>
  </div>
  <!-- v scrollbar -->
  <div class="a" style="left:798px;top:24px;width:12px;height:327px;background:#3a3a3a"></div>
  <div class="a" style="left:799px;top:159px;width:10px;height:84px;background:#454545;border:1px solid #525252"></div>
  <svg style="left:800px;top:28px" width="8" height="320" fill="#a0a0a0"><path d="M0 5l4-4 4 4zM0 314l4 4 4-4z"/></svg>
  <!-- h scrollbar -->
  <div class="a" style="left:2px;top:351.500px;width:796px;height:11.500px;background:#3a3a3a"></div>
  <div class="a" style="left:354px;top:352.500px;width:238.500px;height:9.500px;background:#454545;border:1px solid #555"></div>
  <svg style="left:5px;top:353px" width="790" height="8" fill="#a0a0a0"><path d="M4 0l-4 4 4 4zM782 0l4 4-4 4z"/></svg>
  <div class="a" style="left:402px;top:362.500px;width:13px;height:1px;background:repeating-linear-gradient(90deg,#7a7a7a 0 1px,#0000 1px 2px)"></div>
  <svg style="left:85px;top:13.500px" width="12" height="17" viewBox="0 0 12 17"><path d="M.7 .8v13l3-2.800 2.300 5 2-.9-2.300-4.900h4.200z" fill="#fff" stroke="#000" stroke-width="1" stroke-linejoin="round"/></svg>
  <div class="a" style="left:401.500px;top:-4px;width:14px;height:1px;background:repeating-linear-gradient(90deg,#7a7a7a 0 1px,#0000 1px 2px)"></div>
</div>
<!-- BRUSHES -->
<div id="brushes" class="a dc" style="left:1046px;top:110px;width:234px;height:370px">
<div class="a" style="left:3px;top:6.5px;width:75px;height:14.5px;background:#424242;border:1px solid #3a3a3a;border-bottom:0;border-radius:2px 2px 0 0"></div>
<div class="t" style="left:3px;top:9px;width:75px;text-align:center;font-size:10px;color:#dcdcdc;transform:scale(.99,.88)">Undo Hist...</div>
<div class="a" style="left:81px;top:6.5px;width:75px;height:14.5px;background:#424242;border:1px solid #3a3a3a;border-bottom:0;border-radius:2px 2px 0 0"></div>
<div class="t" style="left:81px;top:9px;width:75px;text-align:center;font-size:10px;color:#dcdcdc;transform:scale(.99,.88)">Tool Opti...</div>
<div class="a" style="left:158px;top:4.5px;width:73px;height:17px;background:#4a4a4a;border:1px solid #3a3a3a;border-bottom:0;border-radius:2px 2px 0 0"></div>
<div class="t" style="left:158px;top:8.5px;width:73px;text-align:center;font-size:10px;color:#dcdcdc;transform:scale(.99,.88)">Brush Pres...</div>
<svg style="left:4px;top:22.500px" width="14" height="13" viewBox="-7 -6.500 14 13" fill="none" stroke="#d8d8d8" stroke-width="1.200"><ellipse cx="0" cy="0" rx="6.400" ry="5.900"/><path d="M-2.200 -.5v-1.200a2.200 2 0 0 1 4.400 0"/><rect x="-3.600" y="-.5" width="7.200" height="4" fill="#d8d8d8" stroke="none"/></svg>
<div class="t" style="left:22.500px;top:25px;font-size:10px;color:#dcdcdc;transform-origin:0 0;transform:scale(1,.88)">Brush Presets</div>
<svg style="left:198.500px;top:23px" width="34" height="13" viewBox="0 0 34 13" fill="none" stroke="#e0e0e0" stroke-width="1.300"><rect x="1" y="5.500" width="7.500" height="6"/><path d="M5 5.500v-3.500h8v6h-4.500"/><path d="M21.500 2.500l8.500 8.500M30 2.500l-8.500 8.500" stroke-width="1.500"/></svg>
<div class="a" style="left:4.500px;top:38.500px;width:138px;height:16px;background:#484848;border:1px solid #3a3a3a;border-radius:2px"></div>
<div class="t" style="left:7px;top:42.500px;font-size:10px;color:#dcdcdc;transform-origin:0 0;transform:scale(1,.88)">All</div>
<svg style="left:131px;top:45px" width="8" height="5"><path d="M0 .5h7l-3.500 3.500z" fill="#a8a8a8"/></svg>
<div class="a" style="left:145px;top:38.500px;width:45px;height:16px;background:#484848;border:1px solid #3a3a3a;border-radius:2px"></div>
<svg style="left:148.500px;top:40.500px" width="11" height="12" fill="none" stroke="#e0e0e0" stroke-width="1.500"><path d="M1.500 10.500v-9.500h7.500v9.500l-3.700-2.500z"/></svg>
<div class="t" style="left:163px;top:42.500px;font-size:10px;color:#dcdcdc;transform-origin:0 0;transform:scale(1,.88)">Tag</div>
<svg style="left:183px;top:49px" width="5" height="4"><path d="M0 .5h4.500l-2.200 2.500z" fill="#9a9a9a"/></svg>
<svg style="left:195px;top:40px" width="14" height="12" stroke="#e0e0e0" stroke-width="1.700"><path d="M0 2h12.500M0 5.800h12.500M0 9.600h12.500"/></svg>
<svg style="left:215px;top:39.500px" width="15" height="13" fill="none" stroke="#e0e0e0" stroke-width="1.200"><rect x=".6" y=".6" width="13.600" height="11.400"/><path d="M.6 6h13.600M7.400 .6v3"/></svg>
<div class="a" style="left:2.500px;top:55.500px;width:216.500px;height:292.500px;background:#262626"></div>
<div class="a" style="left:219px;top:55.500px;width:13px;height:292.500px;background:#3b3b3b"></div>
<div class="a" style="left:221.500px;top:250px;width:10px;height:43px;background:#464646;border:1px solid #555"></div>
<svg style="left:221.500px;top:58px" width="10" height="290" fill="#a0a0a0"><path d="M1 7l4-4 4 4zM1 280l4 4 4-4z"/></svg>
<svg style="left:0;top:0" width="234" height="348" viewBox="1046 110 234 348">
<defs><clipPath id="cc"><rect x="0" y="0" width="52.200" height="46.800"/></clipPath>
<linearGradient id="penbrown" x1="0" y1="0" x2="0" y2="1"><stop offset="0" stop-color="#c89058"/><stop offset=".5" stop-color="#8a5a2c"/><stop offset="1" stop-color="#5a3a1c"/></linearGradient>
<linearGradient id="penred" x1="0" y1="0" x2="0" y2="1"><stop offset="0" stop-color="#d86070"/><stop offset=".5" stop-color="#a02030"/><stop offset="1" stop-color="#601018"/></linearGradient>
<linearGradient id="pengray" x1="0" y1="0" x2="0" y2="1"><stop offset="0" stop-color="#a8a8a8"/><stop offset=".5" stop-color="#606060"/><stop offset="1" stop-color="#383838"/></linearGradient>
<linearGradient id="penblue" x1="0" y1="0" x2="0" y2="1"><stop offset="0" stop-color="#7890a0"/><stop offset=".5" stop-color="#445866"/><stop offset="1" stop-color="#2c3c48"/></linearGradient>
<linearGradient id="penolive" x1="0" y1="0" x2="0" y2="1"><stop offset="0" stop-color="#b0c080"/><stop offset=".5" stop-color="#6a7a3c"/><stop offset="1" stop-color="#3c4820"/></linearGradient>
<linearGradient id="penteal" x1="0" y1="0" x2="0" y2="1"><stop offset="0" stop-color="#c8f0e0"/><stop offset=".5" stop-color="#88c8b0"/><stop offset="1" stop-color="#508870"/></linearGradient>
<linearGradient id="penlav" x1="0" y1="0" x2="0" y2="1"><stop offset="0" stop-color="#e8e0f8"/><stop offset=".5" stop-color="#a8a0d0"/><stop offset="1" stop-color="#6860a0"/></linearGradient>
<linearGradient id="pensteel" x1="0" y1="0" x2="0" y2="1"><stop offset="0" stop-color="#a8c0d0"/><stop offset=".5" stop-color="#6888a0"/><stop offset="1" stop-color="#405868"/></linearGradient>
<radialGradient id="rainbow" cx=".4" cy=".3" r=".8"><stop offset="0" stop-color="#50e8c0"/><stop offset=".45" stop-color="#4090f0"/><stop offset=".8" stop-color="#9050e8"/><stop offset="1" stop-color="#e060c0"/></radialGradient>
<filter id="b1"><feGaussianBlur stdDeviation="1"/></filter><filter id="b05"><feGaussianBlur stdDeviation=".5"/></filter>
</defs>
<g transform="translate(1049.90,166.60)" clip-path="url(#cc)"><rect width="52.200" height="46.800" fill="#d2d2d2"/><path d="M0 19L4 19.500L27 31L13.500 47H0z" fill="#62efe0"/><circle cx="20.5" cy="37" r="2.400" fill="#e84868"/><circle cx="30.5" cy="34.5" r="2.400" fill="#e84868"/><circle cx="37" cy="37.5" r="2.400" fill="#e84868"/><circle cx="16" cy="43" r="2.400" fill="#e84868"/><circle cx="26.5" cy="40.5" r="2.400" fill="#e84868"/><circle cx="33.5" cy="43.5" r="2.400" fill="#e84868"/><circle cx="23" cy="46.5" r="2.400" fill="#e84868"/><circle cx="40" cy="46" r="2.400" fill="#e84868"/><rect x="11.500" y="9.500" width="5.500" height="5" fill="#5a5a5a"/><g transform="translate(24,26.6) rotate(-42.6)"><path d="M0 0L3 -1.500L10 -3.9L46 -5.0V5.0L10 3.9L3 1.500z" fill="url(#penred)"/><path d="M9 -1.8L46 -2.2" stroke="#fff" stroke-opacity=".28" stroke-width="2.2" fill="none"/><path d="M0 0L3.500 -1.700V1.700z" fill="#404040"/></g></g>
<g transform="translate(1103.55,166.60)" clip-path="url(#cc)"><rect width="52.200" height="46.800" fill="#d2d2d2"/><rect width="52.200" height="46.800" fill="#8cbcdc"/><polygon points="29.5,49.0 27.7,51.8 28.3,55.0 25.5,57.1 24.9,60.3 21.5,61.4 19.8,64.2 16.1,64.2 13.4,66.3 10.0,65.1 6.6,66.3 3.9,64.2 0.3,64.2 -1.5,61.4 -4.9,60.3 -5.5,57.1 -8.3,55.0 -7.7,51.8 -9.5,49.0 -7.7,46.2 -8.3,43.0 -5.5,40.9 -4.9,37.7 -1.5,36.6 0.2,33.8 3.9,33.8 6.6,31.7 10.0,32.9 13.4,31.7 16.1,33.8 19.7,33.8 21.5,36.6 24.9,37.7 25.5,40.9 28.3,43.0 27.7,46.2" fill="#8a8a5c"/><polygon points="80.0,50.0 77.7,53.1 78.9,56.6 75.8,58.9 75.9,62.7 72.1,64.1 71.0,67.7 66.9,68.1 64.8,71.3 60.7,70.7 57.7,73.2 54.0,71.5 50.3,73.2 47.3,70.7 43.2,71.3 41.1,68.1 37.0,67.7 35.9,64.1 32.1,62.7 32.2,58.9 29.1,56.6 30.3,53.1 28.0,50.0 30.3,46.9 29.1,43.4 32.2,41.1 32.1,37.3 35.9,35.9 37.0,32.3 41.1,31.9 43.2,28.7 47.3,29.3 50.3,26.8 54.0,28.5 57.7,26.8 60.7,29.3 64.8,28.7 66.9,31.9 71.0,32.3 72.1,35.9 75.9,37.3 75.8,41.1 78.9,43.4 77.7,46.9" fill="#389fcc"/><g fill="none" stroke="#1c3c5c" stroke-width="1.200"><path d="M5 12l5-4 2.500 2.500-5 4z"/><rect x="11.500" y="11" width="5" height="4" fill="#2c4c6c"/></g><g transform="translate(24,26.6) rotate(-42.6)"><path d="M0 0L3 -1.500L10 -3.9L46 -5.0V5.0L10 3.9L3 1.500z" fill="url(#penblue)"/><path d="M9 -1.8L46 -2.2" stroke="#fff" stroke-opacity=".28" stroke-width="2.2" fill="none"/><path d="M0 0L3.500 -1.700V1.700z" fill="#404040"/></g><rect width="52.200" height="46.800" fill="none" stroke="#5a7c9e" stroke-width="3.600"/></g>
<g transform="translate(1157.20,166.60)" clip-path="url(#cc)"><rect width="52.200" height="46.800" fill="#d2d2d2"/><polygon points="29.5,49.0 27.7,51.8 28.3,55.0 25.5,57.1 24.9,60.3 21.5,61.4 19.8,64.2 16.1,64.2 13.4,66.3 10.0,65.1 6.6,66.3 3.9,64.2 0.3,64.2 -1.5,61.4 -4.9,60.3 -5.5,57.1 -8.3,55.0 -7.7,51.8 -9.5,49.0 -7.7,46.2 -8.3,43.0 -5.5,40.9 -4.9,37.7 -1.5,36.6 0.2,33.8 3.9,33.8 6.6,31.7 10.0,32.9 13.4,31.7 16.1,33.8 19.7,33.8 21.5,36.6 24.9,37.7 25.5,40.9 28.3,43.0 27.7,46.2" fill="#d89a48"/><polygon points="80.0,50.0 77.7,53.1 78.9,56.6 75.8,58.9 75.9,62.7 72.1,64.1 71.0,67.7 66.9,68.1 64.8,71.3 60.7,70.7 57.7,73.2 54.0,71.5 50.3,73.2 47.3,70.7 43.2,71.3 41.1,68.1 37.0,67.7 35.9,64.1 32.1,62.7 32.2,58.9 29.1,56.6 30.3,53.1 28.0,50.0 30.3,46.9 29.1,43.4 32.2,41.1 32.1,37.3 35.9,35.9 37.0,32.3 41.1,31.9 43.2,28.7 47.3,29.3 50.3,26.8 54.0,28.5 57.7,26.8 60.7,29.3 64.8,28.7 66.9,31.9 71.0,32.3 72.1,35.9 75.9,37.3 75.8,41.1 78.9,43.4 77.7,46.9" fill="#3fb4c8"/><rect x="11.500" y="9.500" width="5.500" height="5" fill="#5a5a5a"/><g transform="translate(24,26.6) rotate(-42.6)"><path d="M0 0L3 -1.500L10 -3.9L46 -5.0V5.0L10 3.9L3 1.500z" fill="url(#penbrown)"/><path d="M9 -1.8L46 -2.2" stroke="#fff" stroke-opacity=".28" stroke-width="2.2" fill="none"/><path d="M0 0L3.500 -1.700V1.700z" fill="#404040"/></g></g>
<g transform="translate(1210.85,166.60)" clip-path="url(#cc)"><rect width="52.200" height="46.800" fill="#d2d2d2"/><polygon points="29.5,49.0 27.7,51.8 28.3,55.0 25.5,57.1 24.9,60.3 21.5,61.4 19.8,64.2 16.1,64.2 13.4,66.3 10.0,65.1 6.6,66.3 3.9,64.2 0.3,64.2 -1.5,61.4 -4.9,60.3 -5.5,57.1 -8.3,55.0 -7.7,51.8 -9.5,49.0 -7.7,46.2 -8.3,43.0 -5.5,40.9 -4.9,37.7 -1.5,36.6 0.2,33.8 3.9,33.8 6.6,31.7 10.0,32.9 13.4,31.7 16.1,33.8 19.7,33.8 21.5,36.6 24.9,37.7 25.5,40.9 28.3,43.0 27.7,46.2" fill="#d89a48"/><polygon points="80.0,50.0 77.7,53.1 78.9,56.6 75.8,58.9 75.9,62.7 72.1,64.1 71.0,67.7 66.9,68.1 64.8,71.3 60.7,70.7 57.7,73.2 54.0,71.5 50.3,73.2 47.3,70.7 43.2,71.3 41.1,68.1 37.0,67.7 35.9,64.1 32.1,62.7 32.2,58.9 29.1,56.6 30.3,53.1 28.0,50.0 30.3,46.9 29.1,43.4 32.2,41.1 32.1,37.3 35.9,35.9 37.0,32.3 41.1,31.9 43.2,28.7 47.3,29.3 50.3,26.8 54.0,28.5 57.7,26.8 60.7,29.3 64.8,28.7 66.9,31.9 71.0,32.3 72.1,35.9 75.9,37.3 75.8,41.1 78.9,43.4 77.7,46.9" fill="#3fb4c8"/><rect x="11.500" y="9.500" width="5.500" height="5" fill="#5a5a5a"/><g transform="translate(24,26.6) rotate(-42.6)"><path d="M0 0L3 -1.500L10 -3.9L46 -5.0V5.0L10 3.9L3 1.500z" fill="url(#penbrown)"/><path d="M9 -1.8L46 -2.2" stroke="#fff" stroke-opacity=".28" stroke-width="2.2" fill="none"/><path d="M0 0L3.500 -1.700V1.700z" fill="#404040"/></g></g>
<g transform="translate(1049.90,214.67)" clip-path="url(#cc)"><rect width="52.200" height="46.800" fill="#d2d2d2"/><polygon points="29.5,49.0 27.7,51.8 28.3,55.0 25.5,57.1 24.9,60.3 21.5,61.4 19.8,64.2 16.1,64.2 13.4,66.3 10.0,65.1 6.6,66.3 3.9,64.2 0.3,64.2 -1.5,61.4 -4.9,60.3 -5.5,57.1 -8.3,55.0 -7.7,51.8 -9.5,49.0 -7.7,46.2 -8.3,43.0 -5.5,40.9 -4.9,37.7 -1.5,36.6 0.2,33.8 3.9,33.8 6.6,31.7 10.0,32.9 13.4,31.7 16.1,33.8 19.7,33.8 21.5,36.6 24.9,37.7 25.5,40.9 28.3,43.0 27.7,46.2" fill="#d89a48"/><polygon points="80.0,50.0 77.7,53.1 78.9,56.6 75.8,58.9 75.9,62.7 72.1,64.1 71.0,67.7 66.9,68.1 64.8,71.3 60.7,70.7 57.7,73.2 54.0,71.5 50.3,73.2 47.3,70.7 43.2,71.3 41.1,68.1 37.0,67.7 35.9,64.1 32.1,62.7 32.2,58.9 29.1,56.6 30.3,53.1 28.0,50.0 30.3,46.9 29.1,43.4 32.2,41.1 32.1,37.3 35.9,35.9 37.0,32.3 41.1,31.9 43.2,28.7 47.3,29.3 50.3,26.8 54.0,28.5 57.7,26.8 60.7,29.3 64.8,28.7 66.9,31.9 71.0,32.3 72.1,35.9 75.9,37.3 75.8,41.1 78.9,43.4 77.7,46.9" fill="#3fb4c8"/><rect x="11.500" y="9.500" width="5.500" height="5" fill="#5a5a5a"/><g transform="translate(24,26.6) rotate(-42.6)"><path d="M0 0L3 -1.500L10 -3.9L46 -5.0V5.0L10 3.9L3 1.500z" fill="url(#penbrown)"/><path d="M9 -1.8L46 -2.2" stroke="#fff" stroke-opacity=".28" stroke-width="2.2" fill="none"/><path d="M0 0L3.500 -1.700V1.700z" fill="#404040"/></g></g>
<g transform="translate(1103.55,214.67)" clip-path="url(#cc)"><rect width="52.200" height="46.800" fill="#d2d2d2"/><rect width="52.200" height="46.800" fill="#fff"/></g>
<g transform="translate(1157.20,214.67)" clip-path="url(#cc)"><rect width="52.200" height="46.800" fill="#d2d2d2"/><g fill="none" stroke="#4a5870" stroke-width="1.500"><circle cx="14" cy="12" r="2.800"/><path d="M14 7.500v1.500M14 15v1.500M9.500 12h1.500M17 12h1.500M10.800 8.800l1 1M16.200 14.200l1 1M17.200 8.800l-1 1M10.800 15.200l1-1" /></g><g><rect x="0" y="-3" width="22" height="6" rx="2" fill="#e0c8a4" transform="translate(25,11) rotate(32)"/><rect x="0" y="-3" width="26" height="6" rx="2" fill="#d8bc94" transform="translate(17,22) rotate(6)"/><rect x="0" y="-3" width="20" height="6" rx="2" fill="#e0c8a4" transform="translate(21,27) rotate(34)"/></g></g>
<g transform="translate(1210.85,214.67)" clip-path="url(#cc)"><rect width="52.200" height="46.800" fill="#d2d2d2"/><ellipse cx="18" cy="29" rx="13" ry="11.500" fill="none" stroke="#c0d860" stroke-width="4"/><ellipse cx="18" cy="29" rx="8" ry="6.500" fill="#fff"/><g fill="#fff"><rect x="7" y="19" width="4.500" height="4.500"/><rect x="24" y="19" width="4.500" height="4.500"/><rect x="7" y="35" width="4.500" height="4.500"/><rect x="24" y="35" width="4.500" height="4.500"/></g><g transform="translate(32,17) rotate(-35)"><path d="M0 0L3 -1.500L10 -3.9L46 -5.0V5.0L10 3.9L3 1.500z" fill="url(#penolive)"/><path d="M9 -1.8L46 -2.2" stroke="#fff" stroke-opacity=".28" stroke-width="2.2" fill="none"/><path d="M0 0L3.500 -1.700V1.700z" fill="#404040"/></g></g>
<g transform="translate(1049.90,262.74)" clip-path="url(#cc)"><rect width="52.200" height="46.800" fill="#d2d2d2"/><g fill="#cfe8f4" stroke="#5aa8c8" stroke-width=".9"><ellipse cx="18.500" cy="21.500" rx="5.500" ry="5"/><ellipse cx="18.500" cy="37.500" rx="5.500" ry="5"/><ellipse cx="9.500" cy="29.500" rx="5.500" ry="5"/><ellipse cx="27.500" cy="29.500" rx="5.500" ry="5"/><circle cx="18.500" cy="29.500" r="1.500"/></g><g transform="translate(29,20) rotate(-40)"><path d="M0 0L3 -1.500L10 -3.9L46 -5.0V5.0L10 3.9L3 1.500z" fill="url(#pengray)"/><path d="M9 -1.8L46 -2.2" stroke="#fff" stroke-opacity=".28" stroke-width="2.2" fill="none"/><path d="M0 0L3.500 -1.700V1.700z" fill="#404040"/></g></g>
<g transform="translate(1103.55,262.74)" clip-path="url(#cc)"><rect width="52.200" height="46.800" fill="#d2d2d2"/><ellipse cx="17.500" cy="29.500" rx="10.500" ry="9.500" fill="#e0d4c4" stroke="#c89868" stroke-width=".8"/><g fill="#fff" stroke="#e89058" stroke-width="1"><ellipse cx="13.500" cy="26.500" rx="2.500" ry="2.200"/><ellipse cx="21.500" cy="26.500" rx="2.500" ry="2.200"/><ellipse cx="13.500" cy="32.500" rx="2.500" ry="2.200"/><ellipse cx="21.500" cy="32.500" rx="2.500" ry="2.200"/></g><g transform="translate(29,20) rotate(-40)"><path d="M0 0L3 -1.500L10 -3.9L46 -5.0V5.0L10 3.9L3 1.500z" fill="url(#penbrown)"/><path d="M9 -1.8L46 -2.2" stroke="#fff" stroke-opacity=".28" stroke-width="2.2" fill="none"/><path d="M0 0L3.500 -1.700V1.700z" fill="#e8e8e8"/></g></g>
<g transform="translate(1157.20,262.74)" clip-path="url(#cc)"><rect width="52.200" height="46.800" fill="#d2d2d2"/><g fill="none" stroke="#1a1a1a" stroke-width="1.100"><path d="M25 24c-4-2-4 4-1 3s0-5-5-2-3 8 1 6 2-5 5-4 5 3 2 6-7 0-4-2 8 0 10-3"/><path d="M34 36c2 3 8 6 12 2s-2-10 6-12" stroke="#888"/><path d="M36 22l4 1-2 3 5-1" stroke="#aaa" stroke-width=".7"/></g><g transform="translate(28,19) rotate(-40)"><rect x="0" y="-2" width="9" height="4" fill="#f4f4f4"/><rect x="9" y="-2" width="34" height="4" fill="#202020"/></g></g>
<g transform="translate(1210.85,262.74)" clip-path="url(#cc)"><rect width="52.200" height="46.800" fill="#d2d2d2"/><circle cx="12.500" cy="11" r="2.500" fill="#e8d040"/><circle cx="16" cy="13" r="2.500" fill="#e060a0"/><circle cx="12.500" cy="15" r="2.800" fill="#6858d8"/><path d="M11 40c4-2 6-8 8-8s-1 8 2 8 5-10 7-10-1 9 2 9 6-10 8-10-2 9 2 9 6-6 9-10" fill="none" stroke="#88b8c8" stroke-width="2.500" opacity=".85"/><g transform="translate(21,27) rotate(-42)"><path d="M0 0L3 -1.500L10 -2.3L46 -3.0V3.0L10 2.3L3 1.500z" fill="url(#penlav)"/><path d="M9 -1.0L46 -1.4" stroke="#fff" stroke-opacity=".28" stroke-width="1.3" fill="none"/><path d="M0 0L3.500 -1.700V1.700z" fill="#303040"/></g><g transform="translate(21,27) rotate(-42)" stroke="#483878" stroke-width="1" fill="none"><path d="M17-3l3 6M22-3l3 6M27-3l3 6M32-3l3 6"/></g></g>
<g transform="translate(1049.90,310.81)" clip-path="url(#cc)"><rect width="52.200" height="46.800" fill="#d2d2d2"/><path d="M16 35c0 6 6 7 10 3s6-9 8-8-3 12 0 12 6-12 8-13-2 12 1 12 5-8 9-14" fill="none" stroke="#202020" stroke-width="1.300"/><g transform="translate(21,27) rotate(-40)"><path d="M0 0L3 -1.500L10 -2.7L46 -3.5V3.5L10 2.7L3 1.500z" fill="url(#penteal)"/><path d="M9 -1.2L46 -1.6" stroke="#fff" stroke-opacity=".28" stroke-width="1.5" fill="none"/><path d="M0 0L3.500 -1.700V1.700z" fill="#204038"/></g><g transform="translate(21,27) rotate(-40)" stroke="#305848" stroke-width="1" fill="none"><path d="M14-3.500l3 7M20-3.500l3 7M26-3.500l3 7M32-3.500l3 7"/></g></g>
<g transform="translate(1103.55,310.81)" clip-path="url(#cc)"><rect width="52.200" height="46.800" fill="#d2d2d2"/><g fill="none" stroke="#909090" stroke-width="1"><path d="M20 26l28-24M24 22c6-6 14-12 24-14M22 18c4-4 8-8 12-9" stroke="#a8a8a8"/></g><path d="M19 27c-6 4-6 10 0 11s10-6 14-9 8-1 6 4-10 9-14 6 2-8 10-8 10 4 18-1" fill="none" stroke="#1c1c1c" stroke-width="1"/></g>
<g transform="translate(1157.20,310.81)" clip-path="url(#cc)"><rect width="52.200" height="46.800" fill="#d2d2d2"/><g filter="url(#b05)"><path d="M12 32c8 3 22 2 30-4l10-10v24c-10 4-30 4-39-2z" fill="#e040a0"/></g><g transform="translate(22,16) rotate(-38)"><rect x="0" y="-3" width="9" height="6" rx="2.500" fill="#c8b088"/><rect x="9" y="-2.500" width="12" height="5" fill="#d0c8d8"/><rect x="21" y="-2.500" width="20" height="5" fill="#584868"/></g><g transform="translate(24,22) rotate(-38)"><rect x="0" y="-3" width="9" height="6" rx="2.500" fill="#c8b088"/><rect x="9" y="-2.500" width="12" height="5" fill="#d0c8d8"/><rect x="21" y="-2.500" width="20" height="5" fill="#9878b0"/></g><g transform="translate(28,27) rotate(-38)"><rect x="0" y="-3" width="9" height="6" rx="2.500" fill="#c8b088"/><rect x="9" y="-2.500" width="12" height="5" fill="#d0c8d8"/><rect x="21" y="-2.500" width="20" height="5" fill="#705080"/></g></g>
<g transform="translate(1210.85,310.81)" clip-path="url(#cc)"><rect width="52.200" height="46.800" fill="#d2d2d2"/><circle cx="16" cy="34" r="3" fill="#30b0a0"/><circle cx="22" cy="38" r="3.2" fill="#58d8c8"/><circle cx="28" cy="33" r="2.8" fill="#289888"/><circle cx="34" cy="38" r="3.2" fill="#40c0b0"/><circle cx="40" cy="34" r="3" fill="#30a898"/><circle cx="46" cy="39" r="3.2" fill="#58d8c8"/><circle cx="19" cy="41" r="2.5" fill="#208878"/><circle cx="31" cy="42" r="2.6" fill="#30b0a0"/><circle cx="43" cy="43" r="2.5" fill="#289888"/><circle cx="51" cy="35" r="3" fill="#40c0b0"/><circle cx="25" cy="44" r="2" fill="#58d8c8"/><g transform="translate(21,24) rotate(-36)"><path d="M0 0l10-5h8v10h-8z" fill="#606468"/><rect x="18" y="-5.500" width="10" height="11" fill="#808890"/><rect x="28" y="-5" width="22" height="10" fill="#389888"/></g></g>
<g transform="translate(1049.90,358.88)" clip-path="url(#cc)"><rect width="52.200" height="46.800" fill="#d2d2d2"/><ellipse cx="13.500" cy="34.500" rx="9" ry="8.200" fill="url(#rainbow)"/><g transform="translate(22,26) rotate(-42)"><path d="M0 0l12-3.500h8l6-1.500h22v10h-22l-6-1.500h-8z" fill="url(#pensteel)"/><path d="M0 0l8-2.400v4.800z" fill="#283038"/></g></g>
<g transform="translate(1103.55,358.88)" clip-path="url(#cc)"><rect width="52.200" height="46.800" fill="#d2d2d2"/><g><rect x="2.5" y="18.5" width="4.9" height="4.51" fill="#111"/><rect x="2.5" y="23.0" width="4.9" height="4.51" fill="#f4f4f4"/><rect x="2.5" y="27.5" width="4.9" height="4.51" fill="#111"/><rect x="2.5" y="32.0" width="4.9" height="4.51" fill="#f4f4f4"/><rect x="2.5" y="36.5" width="4.9" height="4.51" fill="#111"/><rect x="2.5" y="41.0" width="4.9" height="4.51" fill="#f4f4f4"/><rect x="7.4" y="18.5" width="4.9" height="4.51" fill="#f4f4f4"/><rect x="7.4" y="23.0" width="4.9" height="4.51" fill="#111"/><rect x="7.4" y="27.5" width="4.9" height="4.51" fill="#f4f4f4"/><rect x="7.4" y="32.0" width="4.9" height="4.51" fill="#111"/><rect x="7.4" y="36.5" width="4.9" height="4.51" fill="#f4f4f4"/><rect x="7.4" y="41.0" width="4.9" height="4.51" fill="#111"/><rect x="12.3" y="18.5" width="4.9" height="4.51" fill="#111"/><rect x="12.3" y="23.0" width="4.9" height="4.51" fill="#f4f4f4"/><rect x="12.3" y="27.5" width="4.9" height="4.51" fill="#111"/><rect x="12.3" y="32.0" width="4.9" height="4.51" fill="#f4f4f4"/><rect x="12.3" y="36.5" width="4.9" height="4.51" fill="#111"/><rect x="12.3" y="41.0" width="4.9" height="4.51" fill="#f4f4f4"/><rect x="17.2" y="18.5" width="4.9" height="4.51" fill="#f4f4f4"/><rect x="17.2" y="23.0" width="4.9" height="4.51" fill="#111"/><rect x="17.2" y="27.5" width="4.9" height="4.51" fill="#f4f4f4"/><rect x="17.2" y="32.0" width="4.9" height="4.51" fill="#111"/><rect x="17.2" y="36.5" width="4.9" height="4.51" fill="#f4f4f4"/><rect x="17.2" y="41.0" width="4.9" height="4.51" fill="#111"/><rect x="22.1" y="18.5" width="4.9" height="4.51" fill="#111"/><rect x="22.1" y="23.0" width="4.9" height="4.51" fill="#f4f4f4"/><rect x="22.1" y="27.5" width="4.9" height="4.51" fill="#111"/><rect x="22.1" y="32.0" width="4.9" height="4.51" fill="#f4f4f4"/><rect x="22.1" y="36.5" width="4.9" height="4.51" fill="#111"/><rect x="22.1" y="41.0" width="4.9" height="4.51" fill="#f4f4f4"/><rect x="27.0" y="18.5" width="4.9" height="4.51" fill="#f4f4f4"/><rect x="27.0" y="23.0" width="4.9" height="4.51" fill="#111"/><rect x="27.0" y="27.5" width="4.9" height="4.51" fill="#f4f4f4"/><rect x="27.0" y="32.0" width="4.9" height="4.51" fill="#111"/><rect x="27.0" y="36.5" width="4.9" height="4.51" fill="#f4f4f4"/><rect x="27.0" y="41.0" width="4.9" height="4.51" fill="#111"/></g><rect x="7" y="22" width="21" height="19" fill="#888" opacity=".72" filter="url(#b1)"/><g><circle cx="32.500" cy="10" r="5.800" fill="#b84040" stroke="#3a1414" stroke-width="1.200"/><circle cx="42" cy="7.500" r="5.800" fill="#50a840" stroke="#143414" stroke-width="1.200"/><circle cx="39.500" cy="16" r="5.500" fill="#4050a8" stroke="#141434" stroke-width="1.200"/></g></g>
<g transform="translate(1157.20,358.88)" clip-path="url(#cc)"><rect width="52.200" height="46.800" fill="#d2d2d2"/><g filter="url(#b1)" opacity=".75"><rect x="3.5" y="18.5" width="4.9" height="4.51" fill="#111"/><rect x="3.5" y="23.0" width="4.9" height="4.51" fill="#f4f4f4"/><rect x="3.5" y="27.5" width="4.9" height="4.51" fill="#111"/><rect x="3.5" y="32.0" width="4.9" height="4.51" fill="#f4f4f4"/><rect x="3.5" y="36.5" width="4.9" height="4.51" fill="#111"/><rect x="3.5" y="41.0" width="4.9" height="4.51" fill="#f4f4f4"/><rect x="8.4" y="18.5" width="4.9" height="4.51" fill="#f4f4f4"/><rect x="8.4" y="23.0" width="4.9" height="4.51" fill="#111"/><rect x="8.4" y="27.5" width="4.9" height="4.51" fill="#f4f4f4"/><rect x="8.4" y="32.0" width="4.9" height="4.51" fill="#111"/><rect x="8.4" y="36.5" width="4.9" height="4.51" fill="#f4f4f4"/><rect x="8.4" y="41.0" width="4.9" height="4.51" fill="#111"/><rect x="13.3" y="18.5" width="4.9" height="4.51" fill="#111"/><rect x="13.3" y="23.0" width="4.9" height="4.51" fill="#f4f4f4"/><rect x="13.3" y="27.5" width="4.9" height="4.51" fill="#111"/><rect x="13.3" y="32.0" width="4.9" height="4.51" fill="#f4f4f4"/><rect x="13.3" y="36.5" width="4.9" height="4.51" fill="#111"/><rect x="13.3" y="41.0" width="4.9" height="4.51" fill="#f4f4f4"/><rect x="18.2" y="18.5" width="4.9" height="4.51" fill="#f4f4f4"/><rect x="18.2" y="23.0" width="4.9" height="4.51" fill="#111"/><rect x="18.2" y="27.5" width="4.9" height="4.51" fill="#f4f4f4"/><rect x="18.2" y="32.0" width="4.9" height="4.51" fill="#111"/><rect x="18.2" y="36.5" width="4.9" height="4.51" fill="#f4f4f4"/><rect x="18.2" y="41.0" width="4.9" height="4.51" fill="#111"/><rect x="23.1" y="18.5" width="4.9" height="4.51" fill="#111"/><rect x="23.1" y="23.0" width="4.9" height="4.51" fill="#f4f4f4"/><rect x="23.1" y="27.5" width="4.9" height="4.51" fill="#111"/><rect x="23.1" y="32.0" width="4.9" height="4.51" fill="#f4f4f4"/><rect x="23.1" y="36.5" width="4.9" height="4.51" fill="#111"/><rect x="23.1" y="41.0" width="4.9" height="4.51" fill="#f4f4f4"/><rect x="28.0" y="18.5" width="4.9" height="4.51" fill="#f4f4f4"/><rect x="28.0" y="23.0" width="4.9" height="4.51" fill="#111"/><rect x="28.0" y="27.5" width="4.9" height="4.51" fill="#f4f4f4"/><rect x="28.0" y="32.0" width="4.9" height="4.51" fill="#111"/><rect x="28.0" y="36.5" width="4.9" height="4.51" fill="#f4f4f4"/><rect x="28.0" y="41.0" width="4.9" height="4.51" fill="#111"/></g><g><rect x="8.4" y="23.0" width="4.9" height="4.51" fill="#111"/><rect x="8.4" y="27.5" width="4.9" height="4.51" fill="#f4f4f4"/><rect x="8.4" y="32.0" width="4.9" height="4.51" fill="#111"/><rect x="8.4" y="36.5" width="4.9" height="4.51" fill="#f4f4f4"/><rect x="13.3" y="23.0" width="4.9" height="4.51" fill="#f4f4f4"/><rect x="13.3" y="27.5" width="4.9" height="4.51" fill="#111"/><rect x="13.3" y="32.0" width="4.9" height="4.51" fill="#f4f4f4"/><rect x="13.3" y="36.5" width="4.9" height="4.51" fill="#111"/><rect x="18.2" y="23.0" width="4.9" height="4.51" fill="#111"/><rect x="18.2" y="27.5" width="4.9" height="4.51" fill="#f4f4f4"/><rect x="18.2" y="32.0" width="4.9" height="4.51" fill="#111"/><rect x="18.2" y="36.5" width="4.9" height="4.51" fill="#f4f4f4"/><rect x="23.1" y="23.0" width="4.9" height="4.51" fill="#f4f4f4"/><rect x="23.1" y="27.5" width="4.9" height="4.51" fill="#111"/><rect x="23.1" y="32.0" width="4.9" height="4.51" fill="#f4f4f4"/><rect x="23.1" y="36.5" width="4.9" height="4.51" fill="#111"/></g><g><circle cx="32.500" cy="10" r="5.800" fill="#b84040" stroke="#3a1414" stroke-width="1.200"/><circle cx="42" cy="7.500" r="5.800" fill="#50a840" stroke="#143414" stroke-width="1.200"/><circle cx="39.500" cy="16" r="5.500" fill="#4050a8" stroke="#141434" stroke-width="1.200"/></g></g>
<g transform="translate(1210.85,358.88)" clip-path="url(#cc)"><rect width="52.200" height="46.800" fill="#d2d2d2"/><path d="M19 33L52 24V47H26z" fill="#151515" opacity=".82" filter="url(#b1)"/><path d="M35.4 37.7l12.0 2.1M9.3 28.9l11.1 7.7M47.6 17.6l5.9 7.1M24.8 17.3l4.7 5.5M26.0 19.8l4.4 12.0M14.1 33.8l5.0 3.5M50.8 14.2l7.7 9.2M46.4 23.3l13.4 2.4M46.5 34.0l4.3 5.1M21.1 25.6l4.2 5.0M19.6 24.6l12.2 2.1M22.9 23.9l4.2 11.6M38.6 19.9l5.9 7.1M45.2 14.6l11.4 -4.1M24.6 40.9l5.8 7.0M13.2 21.9l4.2 11.6M23.2 25.4l3.3 9.1M12.0 24.9l6.7 8.0M32.0 24.0l5.0 6.0M43.1 34.1l10.8 -3.9M51.9 19.2l5.4 0.9M31.5 27.0l7.0 1.2M23.1 22.0l7.0 8.3M9.4 29.8l8.1 9.6M51.2 32.0l2.1 5.8M12.7 27.9l2.2 6.0M21.0 28.5l9.0 10.7M50.9 28.5l8.8 -3.2M29.1 23.3l5.5 6.6M31.4 19.7l12.6 -4.6M15.9 29.7l9.5 1.7M46.2 25.6l11.3 -4.1M38.6 35.2l11.1 -4.0M32.6 35.4l11.8 -4.3M41.9 36.1l7.2 -2.6M36.6 32.6l5.0 0.9M42.0 24.4l7.0 -2.6M43.9 34.7l11.4 -4.2M20.1 25.1l4.6 12.6M23.4 41.0l4.4 12.1M30.8 30.9l6.1 -2.2M49.2 29.3l3.8 10.5M33.6 35.3l8.7 1.5M16.6 32.8l6.8 8.1" stroke="#1a1a1a" stroke-width=".7" fill="none"/><rect x="34" y="3" width="14" height="13" rx="1.500" fill="#4a4a4a"/><rect x="35.2" y="4.2" width="3.900" height="3.600" fill="#f0f0f0"/><rect x="43.0" y="4.2" width="3.900" height="3.600" fill="#f0f0f0"/><rect x="39.1" y="7.8" width="3.900" height="3.600" fill="#f0f0f0"/><rect x="35.2" y="11.4" width="3.900" height="3.600" fill="#f0f0f0"/><rect x="43.0" y="11.4" width="3.900" height="3.600" fill="#f0f0f0"/></g>
<g transform="translate(1049.90,406.95)" clip-path="url(#cc)"><rect width="52.200" height="46.800" fill="#d2d2d2"/><g fill="#151515"><circle cx="8.0" cy="25.6" r="0.75"/><circle cx="8.0" cy="29.5" r="1.02"/><circle cx="8.0" cy="33.4" r="1.29"/><circle cx="8.0" cy="37.3" r="1.56"/><circle cx="8.0" cy="41.2" r="1.83"/><circle cx="11.9" cy="21.7" r="0.66"/><circle cx="11.9" cy="25.6" r="0.93"/><circle cx="11.9" cy="29.5" r="1.20"/><circle cx="11.9" cy="33.4" r="1.47"/><circle cx="11.9" cy="37.3" r="1.74"/><circle cx="11.9" cy="41.2" r="1.90"/><circle cx="15.8" cy="17.8" r="0.58"/><circle cx="15.8" cy="21.7" r="0.85"/><circle cx="15.8" cy="25.6" r="1.12"/><circle cx="15.8" cy="29.5" r="1.39"/><circle cx="15.8" cy="33.4" r="1.66"/><circle cx="15.8" cy="37.3" r="1.90"/><circle cx="15.8" cy="41.2" r="1.90"/><circle cx="19.7" cy="17.8" r="0.77"/><circle cx="19.7" cy="21.7" r="1.04"/><circle cx="19.7" cy="25.6" r="1.30"/><circle cx="19.7" cy="29.5" r="1.57"/><circle cx="19.7" cy="33.4" r="1.84"/><circle cx="19.7" cy="37.3" r="1.90"/><circle cx="19.7" cy="41.2" r="1.90"/><circle cx="23.6" cy="13.9" r="0.68"/><circle cx="23.6" cy="17.8" r="0.95"/><circle cx="23.6" cy="21.7" r="1.22"/><circle cx="23.6" cy="25.6" r="1.49"/><circle cx="23.6" cy="29.5" r="1.76"/><circle cx="23.6" cy="33.4" r="1.90"/><circle cx="23.6" cy="37.3" r="1.90"/><circle cx="23.6" cy="41.2" r="1.90"/><circle cx="27.5" cy="10.0" r="0.60"/><circle cx="27.5" cy="13.9" r="0.87"/><circle cx="27.5" cy="17.8" r="1.14"/><circle cx="27.5" cy="21.7" r="1.41"/><circle cx="27.5" cy="25.6" r="1.67"/><circle cx="27.5" cy="29.5" r="1.90"/><circle cx="27.5" cy="33.4" r="1.90"/><circle cx="27.5" cy="37.3" r="1.90"/><circle cx="27.5" cy="41.2" r="1.90"/><circle cx="31.4" cy="10.0" r="0.78"/><circle cx="31.4" cy="13.9" r="1.05"/><circle cx="31.4" cy="17.8" r="1.32"/><circle cx="31.4" cy="21.7" r="1.59"/><circle cx="31.4" cy="25.6" r="1.86"/><circle cx="31.4" cy="29.5" r="1.90"/><circle cx="31.4" cy="33.4" r="1.90"/><circle cx="31.4" cy="37.3" r="1.90"/><circle cx="31.4" cy="41.2" r="1.90"/><circle cx="35.3" cy="10.0" r="0.97"/><circle cx="35.3" cy="13.9" r="1.24"/><circle cx="35.3" cy="17.8" r="1.51"/><circle cx="35.3" cy="21.7" r="1.78"/><circle cx="35.3" cy="25.6" r="1.90"/><circle cx="35.3" cy="29.5" r="1.90"/><circle cx="35.3" cy="33.4" r="1.90"/><circle cx="35.3" cy="37.3" r="1.90"/><circle cx="35.3" cy="41.2" r="1.90"/><circle cx="39.2" cy="10.0" r="1.15"/><circle cx="39.2" cy="13.9" r="1.42"/><circle cx="39.2" cy="17.8" r="1.69"/><circle cx="39.2" cy="21.7" r="1.90"/><circle cx="39.2" cy="25.6" r="1.90"/><circle cx="39.2" cy="29.5" r="1.90"/><circle cx="39.2" cy="33.4" r="1.90"/><circle cx="39.2" cy="37.3" r="1.90"/><circle cx="39.2" cy="41.2" r="1.90"/><circle cx="43.1" cy="10.0" r="1.34"/><circle cx="43.1" cy="13.9" r="1.61"/><circle cx="43.1" cy="17.8" r="1.88"/><circle cx="43.1" cy="21.7" r="1.90"/><circle cx="43.1" cy="25.6" r="1.90"/><circle cx="43.1" cy="29.5" r="1.90"/><circle cx="43.1" cy="33.4" r="1.90"/><circle cx="43.1" cy="37.3" r="1.90"/><circle cx="43.1" cy="41.2" r="1.90"/><circle cx="47.0" cy="10.0" r="1.52"/><circle cx="47.0" cy="13.9" r="1.79"/><circle cx="47.0" cy="17.8" r="1.90"/><circle cx="47.0" cy="21.7" r="1.90"/><circle cx="47.0" cy="25.6" r="1.90"/><circle cx="47.0" cy="29.5" r="1.90"/><circle cx="47.0" cy="33.4" r="1.90"/><circle cx="47.0" cy="37.3" r="1.90"/><circle cx="47.0" cy="41.2" r="1.90"/><circle cx="50.9" cy="10.0" r="1.71"/><circle cx="50.9" cy="13.9" r="1.90"/><circle cx="50.9" cy="17.8" r="1.90"/><circle cx="50.9" cy="21.7" r="1.90"/><circle cx="50.9" cy="25.6" r="1.90"/><circle cx="50.9" cy="29.5" r="1.90"/><circle cx="50.9" cy="33.4" r="1.90"/><circle cx="50.9" cy="37.3" r="1.90"/><circle cx="50.9" cy="41.2" r="1.90"/></g><rect x="34" y="3" width="14" height="13" rx="1.500" fill="#4a4a4a"/><rect x="35.2" y="4.2" width="3.900" height="3.600" fill="#f0f0f0"/><rect x="43.0" y="4.2" width="3.900" height="3.600" fill="#f0f0f0"/><rect x="39.1" y="7.8" width="3.900" height="3.600" fill="#f0f0f0"/><rect x="35.2" y="11.4" width="3.900" height="3.600" fill="#f0f0f0"/><rect x="43.0" y="11.4" width="3.900" height="3.600" fill="#f0f0f0"/></g>
<g transform="translate(1103.55,406.95)" clip-path="url(#cc)"><rect width="52.200" height="46.800" fill="#d2d2d2"/><g fill="#181818"><rect x="5.5" y="14.9" width="1.4" height="1.4" transform="rotate(40 6.2 15.6)"/><rect x="7.4" y="17.9" width="1.5" height="1.5" transform="rotate(40 8.2 18.6)"/><rect x="9.3" y="20.9" width="1.6" height="1.6" transform="rotate(40 10.2 21.7)"/><rect x="11.3" y="23.9" width="1.8" height="1.8" transform="rotate(40 12.1 24.7)"/><rect x="6.4" y="11.0" width="1.5" height="1.5" transform="rotate(40 7.1 11.8)"/><rect x="8.3" y="14.0" width="1.6" height="1.6" transform="rotate(40 9.1 14.8)"/><rect x="10.2" y="17.0" width="1.7" height="1.7" transform="rotate(40 11.1 17.9)"/><rect x="12.1" y="20.0" width="1.8" height="1.8" transform="rotate(40 13.0 21.0)"/><rect x="14.0" y="23.0" width="1.9" height="1.9" transform="rotate(40 15.0 24.0)"/><rect x="16.0" y="26.0" width="2.1" height="2.1" transform="rotate(40 17.0 27.1)"/><rect x="17.9" y="29.1" width="2.2" height="2.2" transform="rotate(40 19.0 30.1)"/><rect x="7.2" y="7.2" width="1.5" height="1.5" transform="rotate(40 8.0 8.0)"/><rect x="9.2" y="10.2" width="1.6" height="1.6" transform="rotate(40 10.0 11.1)"/><rect x="11.1" y="13.2" width="1.8" height="1.8" transform="rotate(40 12.0 14.1)"/><rect x="13.0" y="16.2" width="1.9" height="1.9" transform="rotate(40 13.9 17.2)"/><rect x="14.9" y="19.2" width="2.0" height="2.0" transform="rotate(40 15.9 20.2)"/><rect x="16.8" y="22.2" width="2.1" height="2.1" transform="rotate(40 17.9 23.3)"/><rect x="18.8" y="25.2" width="2.2" height="2.2" transform="rotate(40 19.9 26.4)"/><rect x="20.7" y="28.2" width="2.4" height="2.4" transform="rotate(40 21.9 29.4)"/><rect x="22.6" y="31.2" width="2.5" height="2.5" transform="rotate(40 23.8 32.5)"/><rect x="24.5" y="34.2" width="2.6" height="2.6" transform="rotate(40 25.8 35.5)"/><rect x="12.0" y="9.4" width="1.8" height="1.8" transform="rotate(40 12.9 10.3)"/><rect x="13.9" y="12.4" width="1.9" height="1.9" transform="rotate(40 14.8 13.4)"/><rect x="15.8" y="15.4" width="2.0" height="2.0" transform="rotate(40 16.8 16.5)"/><rect x="17.7" y="18.4" width="2.2" height="2.2" transform="rotate(40 18.8 19.5)"/><rect x="19.6" y="21.4" width="2.3" height="2.3" transform="rotate(40 20.8 22.6)"/><rect x="21.6" y="24.4" width="2.4" height="2.4" transform="rotate(40 22.8 25.6)"/><rect x="23.5" y="27.4" width="2.5" height="2.5" transform="rotate(40 24.7 28.7)"/><rect x="25.4" y="30.4" width="2.6" height="2.6" transform="rotate(40 26.7 31.8)"/><rect x="27.3" y="33.4" width="2.8" height="2.8" transform="rotate(40 28.7 34.8)"/><rect x="29.2" y="36.4" width="2.9" height="2.9" transform="rotate(40 30.7 37.9)"/><rect x="31.2" y="39.4" width="3.0" height="3.0" transform="rotate(40 32.7 40.9)"/><rect x="14.7" y="8.6" width="2.0" height="2.0" transform="rotate(40 15.7 9.6)"/><rect x="16.7" y="11.6" width="2.1" height="2.1" transform="rotate(40 17.7 12.7)"/><rect x="18.6" y="14.6" width="2.2" height="2.2" transform="rotate(40 19.7 15.7)"/><rect x="20.5" y="17.6" width="2.3" height="2.3" transform="rotate(40 21.7 18.8)"/><rect x="22.4" y="20.6" width="2.5" height="2.5" transform="rotate(40 23.7 21.9)"/><rect x="24.4" y="23.6" width="2.6" height="2.6" transform="rotate(40 25.6 24.9)"/><rect x="26.3" y="26.6" width="2.7" height="2.7" transform="rotate(40 27.6 28.0)"/><rect x="28.2" y="29.6" width="2.8" height="2.8" transform="rotate(40 29.6 31.0)"/><rect x="30.1" y="32.6" width="2.9" height="2.9" transform="rotate(40 31.6 34.1)"/><rect x="32.0" y="35.6" width="3.1" height="3.1" transform="rotate(40 33.6 37.2)"/><rect x="34.0" y="38.6" width="3.2" height="3.2" transform="rotate(40 35.5 40.2)"/><rect x="19.5" y="10.8" width="2.3" height="2.3" transform="rotate(40 20.6 12.0)"/><rect x="21.4" y="13.8" width="2.4" height="2.4" transform="rotate(40 22.6 15.0)"/><rect x="23.3" y="16.8" width="2.5" height="2.5" transform="rotate(40 24.6 18.1)"/><rect x="25.2" y="19.8" width="2.6" height="2.6" transform="rotate(40 26.5 21.1)"/><rect x="27.1" y="22.8" width="2.8" height="2.8" transform="rotate(40 28.5 24.2)"/><rect x="29.1" y="25.8" width="2.9" height="2.9" transform="rotate(40 30.5 27.3)"/><rect x="31.0" y="28.8" width="3.0" height="3.0" transform="rotate(40 32.5 30.3)"/><rect x="32.9" y="31.8" width="3.1" height="3.1" transform="rotate(40 34.5 33.4)"/><rect x="34.8" y="34.8" width="3.2" height="3.2" transform="rotate(40 36.4 36.4)"/><rect x="36.8" y="37.9" width="3.2" height="3.2" transform="rotate(40 38.4 39.5)"/><rect x="26.1" y="16.0" width="2.7" height="2.7" transform="rotate(40 27.4 17.4)"/><rect x="28.0" y="19.0" width="2.8" height="2.8" transform="rotate(40 29.4 20.4)"/><rect x="29.9" y="22.0" width="2.9" height="2.9" transform="rotate(40 31.4 23.5)"/><rect x="31.9" y="25.0" width="3.0" height="3.0" transform="rotate(40 33.4 26.5)"/><rect x="33.8" y="28.0" width="3.2" height="3.2" transform="rotate(40 35.4 29.6)"/><rect x="35.7" y="31.1" width="3.2" height="3.2" transform="rotate(40 37.3 32.7)"/><rect x="37.7" y="34.1" width="3.2" height="3.2" transform="rotate(40 39.3 35.7)"/><rect x="39.7" y="37.2" width="3.2" height="3.2" transform="rotate(40 41.3 38.8)"/><rect x="32.7" y="21.2" width="3.1" height="3.1" transform="rotate(40 34.3 22.8)"/><rect x="34.7" y="24.2" width="3.2" height="3.2" transform="rotate(40 36.3 25.8)"/><rect x="36.6" y="27.3" width="3.2" height="3.2" transform="rotate(40 38.2 28.9)"/><rect x="38.6" y="30.3" width="3.2" height="3.2" transform="rotate(40 40.2 31.9)"/><rect x="40.6" y="33.4" width="3.2" height="3.2" transform="rotate(40 42.2 35.0)"/><rect x="42.6" y="36.5" width="3.2" height="3.2" transform="rotate(40 44.2 38.1)"/><rect x="39.5" y="26.6" width="3.2" height="3.2" transform="rotate(40 41.1 28.2)"/><rect x="41.5" y="29.6" width="3.2" height="3.2" transform="rotate(40 43.1 31.2)"/><rect x="43.5" y="32.7" width="3.2" height="3.2" transform="rotate(40 45.1 34.3)"/><rect x="45.5" y="35.7" width="3.2" height="3.2" transform="rotate(40 47.1 37.3)"/><rect x="46.4" y="32.0" width="3.2" height="3.2" transform="rotate(40 48.0 33.6)"/><rect x="48.3" y="35.0" width="3.2" height="3.2" transform="rotate(40 49.9 36.6)"/></g><rect x="34" y="3" width="14" height="13" rx="1.500" fill="#4a4a4a"/><rect x="35.2" y="4.2" width="3.900" height="3.600" fill="#f0f0f0"/><rect x="43.0" y="4.2" width="3.900" height="3.600" fill="#f0f0f0"/><rect x="39.1" y="7.8" width="3.900" height="3.600" fill="#f0f0f0"/><rect x="35.2" y="11.4" width="3.900" height="3.600" fill="#f0f0f0"/><rect x="43.0" y="11.4" width="3.900" height="3.600" fill="#f0f0f0"/></g>
<g transform="translate(1157.20,406.95)" clip-path="url(#cc)"><rect width="52.200" height="46.800" fill="#d2d2d2"/><g fill="#202020" filter="url(#b1)"><circle cx="29.8" cy="41.5" r="3.9" opacity="0.26"/><circle cx="16.8" cy="34.6" r="2.2" opacity="0.30"/><circle cx="22.6" cy="36.9" r="2.6" opacity="0.26"/><circle cx="13.6" cy="35.1" r="3.8" opacity="0.46"/><circle cx="28.1" cy="44.8" r="2.0" opacity="0.39"/><circle cx="23.6" cy="39.1" r="2.3" opacity="0.54"/><circle cx="23.5" cy="35.0" r="3.8" opacity="0.28"/><circle cx="14.6" cy="32.7" r="3.7" opacity="0.59"/><circle cx="31.7" cy="29.3" r="4.4" opacity="0.47"/><circle cx="21.1" cy="36.0" r="3.8" opacity="0.45"/><circle cx="58.9" cy="30.5" r="3.8" opacity="0.37"/><circle cx="26.4" cy="33.9" r="2.3" opacity="0.45"/><circle cx="20.6" cy="32.2" r="3.9" opacity="0.56"/><circle cx="16.2" cy="37.7" r="2.7" opacity="0.35"/><circle cx="38.5" cy="33.2" r="4.9" opacity="0.57"/><circle cx="17.7" cy="31.8" r="4.9" opacity="0.42"/><circle cx="16.2" cy="36.2" r="5.0" opacity="0.42"/><circle cx="22.6" cy="39.5" r="2.4" opacity="0.47"/><circle cx="15.8" cy="35.4" r="4.3" opacity="0.54"/><circle cx="42.0" cy="34.5" r="2.8" opacity="0.58"/><circle cx="27.9" cy="30.3" r="2.8" opacity="0.30"/><circle cx="36.8" cy="33.7" r="3.8" opacity="0.42"/><circle cx="15.1" cy="28.6" r="4.2" opacity="0.29"/><circle cx="26.7" cy="29.8" r="3.6" opacity="0.37"/><circle cx="21.4" cy="39.9" r="3.4" opacity="0.38"/><circle cx="25.5" cy="27.3" r="2.1" opacity="0.34"/><circle cx="-1.9" cy="37.1" r="4.7" opacity="0.44"/><circle cx="48.5" cy="34.8" r="3.3" opacity="0.45"/><circle cx="21.2" cy="27.2" r="3.4" opacity="0.57"/><circle cx="16.2" cy="37.3" r="4.6" opacity="0.32"/><circle cx="19.0" cy="43.0" r="2.2" opacity="0.54"/><circle cx="21.3" cy="29.0" r="2.9" opacity="0.52"/><circle cx="32.1" cy="32.5" r="3.4" opacity="0.44"/><circle cx="14.4" cy="34.1" r="2.5" opacity="0.46"/><circle cx="27.9" cy="32.3" r="2.7" opacity="0.54"/><circle cx="31.0" cy="26.9" r="2.1" opacity="0.50"/><circle cx="72.1" cy="31.6" r="4.1" opacity="0.27"/><circle cx="31.0" cy="31.1" r="3.9" opacity="0.58"/><circle cx="24.4" cy="31.4" r="2.9" opacity="0.57"/><circle cx="36.5" cy="39.5" r="3.2" opacity="0.31"/><circle cx="23.2" cy="33.0" r="2.3" opacity="0.38"/><circle cx="30.0" cy="34.8" r="3.7" opacity="0.51"/><circle cx="31.0" cy="32.1" r="3.3" opacity="0.36"/><circle cx="13.8" cy="30.6" r="4.8" opacity="0.38"/><circle cx="44.9" cy="36.7" r="2.5" opacity="0.47"/><circle cx="-2.5" cy="33.6" r="3.7" opacity="0.47"/><circle cx="24.6" cy="40.3" r="2.8" opacity="0.51"/><circle cx="19.1" cy="33.7" r="2.7" opacity="0.38"/><circle cx="25.3" cy="30.9" r="4.1" opacity="0.48"/><circle cx="42.6" cy="37.8" r="2.3" opacity="0.29"/><circle cx="18.0" cy="31.9" r="4.6" opacity="0.42"/><circle cx="15.7" cy="42.0" r="2.1" opacity="0.50"/><circle cx="33.0" cy="34.9" r="4.9" opacity="0.49"/><circle cx="27.1" cy="36.4" r="4.9" opacity="0.48"/><circle cx="29.1" cy="31.5" r="3.9" opacity="0.37"/><circle cx="27.1" cy="38.5" r="3.8" opacity="0.37"/><circle cx="20.7" cy="35.8" r="4.5" opacity="0.48"/><circle cx="30.7" cy="29.0" r="4.6" opacity="0.43"/><circle cx="11.8" cy="30.4" r="4.2" opacity="0.39"/><circle cx="28.8" cy="34.7" r="2.6" opacity="0.26"/><circle cx="37.4" cy="30.3" r="4.3" opacity="0.25"/><circle cx="-0.8" cy="36.0" r="3.9" opacity="0.40"/><circle cx="20.2" cy="34.5" r="2.5" opacity="0.31"/><circle cx="16.9" cy="37.5" r="4.6" opacity="0.30"/><circle cx="25.7" cy="38.0" r="2.5" opacity="0.35"/><circle cx="27.4" cy="39.7" r="2.1" opacity="0.57"/><circle cx="5.2" cy="42.6" r="4.1" opacity="0.49"/><circle cx="-4.9" cy="36.1" r="2.4" opacity="0.48"/><circle cx="21.0" cy="41.2" r="4.2" opacity="0.31"/><circle cx="26.9" cy="35.1" r="2.7" opacity="0.28"/></g><rect x="34" y="3" width="14" height="13" rx="1.500" fill="#a06070"/><rect x="35.2" y="4.2" width="3.900" height="3.600" fill="#f8e0e4"/><rect x="43.0" y="4.2" width="3.900" height="3.600" fill="#f8e0e4"/><rect x="39.1" y="7.8" width="3.900" height="3.600" fill="#f8e0e4"/><rect x="35.2" y="11.4" width="3.900" height="3.600" fill="#f8e0e4"/><rect x="43.0" y="11.4" width="3.900" height="3.600" fill="#f8e0e4"/></g>
<g transform="translate(1210.85,406.95)" clip-path="url(#cc)"><rect width="52.200" height="46.800" fill="#d2d2d2"/><path d="M15 12c2 6-2 10 4 14s-8 6-12 10 4 8 12 8 16 2 22-4-2-10 2-14-8-4-14-2-8 2-10-2M10 32c6-4 14 2 20-2s10-8 14-6M14 40c8 2 18-6 26-4M18 20c4 4 2 8 6 10" fill="none" stroke="#2a2a2a" stroke-width=".8"/><path d="M15 12c2 6-2 10 4 14s-8 6-12 10 4 8 12 8 16 2 22-4-2-10 2-14-8-4-14-2-8 2-10-2M10 32c6-4 14 2 20-2s10-8 14-6M14 40c8 2 18-6 26-4M18 20c4 4 2 8 6 10" fill="none" stroke="#2a2a2a" stroke-width=".5" transform="translate(1.500,1) rotate(3 26 30)" opacity=".7"/><rect x="34" y="3" width="14" height="13" rx="1.500" fill="#a06070"/><rect x="35.2" y="4.2" width="3.900" height="3.600" fill="#f8e0e4"/><rect x="43.0" y="4.2" width="3.900" height="3.600" fill="#f8e0e4"/><rect x="39.1" y="7.8" width="3.900" height="3.600" fill="#f8e0e4"/><rect x="35.2" y="11.4" width="3.900" height="3.600" fill="#f8e0e4"/><rect x="43.0" y="11.4" width="3.900" height="3.600" fill="#f8e0e4"/></g>
<rect x="1049.90" y="455.02" width="52.200" height="2.800" fill="#d2d2d2"/>
<rect x="1103.55" y="455.02" width="52.200" height="2.800" fill="#d2d2d2"/>
<rect x="1157.20" y="455.02" width="52.200" height="2.800" fill="#d2d2d2"/>
<rect x="1210.85" y="455.02" width="52.200" height="2.800" fill="#d2d2d2"/>
</svg>
<div class="a" style="left:4.500px;top:349px;width:148px;height:16px;background:#3a3a3a;border-radius:1px"></div>
<div class="t" style="left:6.500px;top:353px;font-size:10px;color:#787878;transform-origin:0 0;transform:scale(1,.88)">Search</div>
<div class="a" style="left:157px;top:351.500px;width:13.500px;height:11px;background:#3a3a3a"></div>
<div class="t" style="left:174.500px;top:353px;font-size:10px;color:#dcdcdc;transform-origin:0 0;transform:scale(.98,.88)">Filter in Tag</div>
</div>
<!-- TIMELINE -->
<div id="timeline" class="a dc" style="left:0;top:478px;width:1280px;height:187px">
<div class="t" style="left:7.500px;top:13.500px;font-size:10px;color:#dcdcdc;transform-origin:0 0;transform:scale(1.01,.88)">Animation Timeline</div>
<svg style="left:0;top:0" width="1280" height="30" viewBox="0 478 1280 30" fill="#d6d6d6" stroke="none">
<path d="M131.500 487.500h2.200v12h-2.200zM144.500 487.500v12l-9.500-6z"/><path d="M138.500 493.500l4.500-3v6z" fill="#474747"/>
<path d="M168.500 487.500v12l-8.500-6zM170 487.500h1.800v12h-1.800z"/>
<rect x="185" y="488" width="11.500" height="11"/>
<path d="M214 487.500l8 6-8 6z"/>
<path d="M240 487.500h1.800v12h-1.800zM243 487.500l8 6-8 6z"/>
<path d="M265 487.500l9.500 6-9.500 6zM275.800 487.500h2.200v12h-2.200z"/><path d="M266.500 490.500l4.500 3-4.500 3z" fill="#474747"/>
<g fill="none" stroke="#e0e0e0" stroke-width="1.400"><rect x="377" y="488.500" width="12" height="9.500"/><path d="M375 491v5M391 491v5M380.500 486.500l2.500 2 2.500-2" stroke-width="1.200"/><path d="M381.500 491l4 2.300-4 2.300z" fill="#e0e0e0" stroke="none"/></g>
<g fill="none" stroke="#e0e0e0" stroke-width="1.500"><rect x="501" y="488.500" width="15" height="9.500"/><rect x="527" y="490.500" width="12" height="8"/><path d="M530.500 490.500v-2.500h12.500v8h-3.500"/><rect x="553.500" y="488.500" width="14" height="9.500"/><path d="M555 500l12-13.500"/></g>
<g fill="#cfcfcf"><path d="M1126 486c3 3 5 7 4.500 12.500h-7c-3-2-3.500-7 2.500-12.500z"/><path d="M1122 489c-3 3-4.500 6.500-2.500 9.500h3c-2-3-2-6-.5-9.500zM1130.500 489c2 3 3.500 6 2.500 9.500h3c1.500-3 0-7-5.500-9.500z"/></g>
<path d="M1146 491h3.500l5.500-4.500v14l-5.500-4.500h-3.500z"/><path d="M1160 499h4l-2 2z" fill="#9a9a9a"/>
<path d="M1172 487.500h17v2.200h-17zM1172 492.400h17v2.200h-17zM1172 497.300h17v2.200h-17z"/><path d="M1187 500.500h4l-2 2z" fill="#9a9a9a"/>
<g fill="none" stroke="#e0e0e0" stroke-width="1.300"><rect x="1228" y="492.500" width="7" height="6"/><path d="M1232 492.500v-3.500h8v6h-5"/><path d="M1255 489l9 9M1264 489l-9 9" stroke-width="1.500"/></g>
</svg>
<div class="a" style="left:297.500px;top:7px;width:55px;height:17.500px;background:#3a3a3a;border:1px solid #353535"></div>
<div class="t" style="left:301.500px;top:12px;font-size:9.500px;color:#d8d8d8;transform-origin:0 0;transform:scale(1,.88)">#&nbsp; 0</div>
<svg style="left:345px;top:10px" width="8" height="12"><path d="M1 4l2.500-3 2.500 3zM1 8l2.500 3 2.500-3z" fill="#8a8a8a"/></svg>
<div class="a" style="left:397.500px;top:8px;width:72.500px;height:16.500px;background:#313131"></div>
<div class="a" style="left:397.500px;top:8px;width:30px;height:16.500px;background:#51779d"></div>
<div class="t" style="left:401.500px;top:12px;font-size:9.500px;color:#e4e4e4;transform-origin:0 0;transform:scale(1.02,.88)">Speed: 100 %</div>
<svg style="left:470px;top:10px" width="8" height="12"><path d="M1 4l2.500-3 2.500 3zM1 8l2.500 3 2.500-3z" fill="#8a8a8a"/></svg>
<div class="a" style="left:635px;top:1px;width:13px;height:1px;background:repeating-linear-gradient(90deg,#7a7a7a 0 1px,#0000 1px 2px)"></div>
<div class="a" style="left:151.800px;top:28.300px;width:1128.200px;height:14.200px;background:#393939"></div>
<div class="t" style="left:154.3px;top:31.500px;font-size:9.500px;color:#d4d4d4;z-index:3;transform-origin:0 0;transform:scale(1,.9)">0</div>
<div class="t" style="left:213.0px;top:31.500px;font-size:9.500px;color:#d4d4d4;z-index:3;transform-origin:0 0;transform:scale(1,.9)">6</div>
<div class="t" style="left:271.7px;top:31.500px;font-size:9.500px;color:#d4d4d4;z-index:3;transform-origin:0 0;transform:scale(1,.9)">12</div>
<div class="t" style="left:330.3px;top:31.500px;font-size:9.500px;color:#d4d4d4;z-index:3;transform-origin:0 0;transform:scale(1,.9)">18</div>
<div class="t" style="left:389.0px;top:31.500px;font-size:9.500px;color:#d4d4d4;z-index:3;transform-origin:0 0;transform:scale(1,.9)">24</div>
<div class="t" style="left:447.7px;top:31.500px;font-size:9.500px;color:#d4d4d4;z-index:3;transform-origin:0 0;transform:scale(1,.9)">30</div>
<div class="t" style="left:506.4px;top:31.500px;font-size:9.500px;color:#d4d4d4;z-index:3;transform-origin:0 0;transform:scale(1,.9)">36</div>
<div class="t" style="left:565.1px;top:31.500px;font-size:9.500px;color:#d4d4d4;z-index:3;transform-origin:0 0;transform:scale(1,.9)">42</div>
<div class="t" style="left:623.7px;top:31.500px;font-size:9.500px;color:#d4d4d4;z-index:3;transform-origin:0 0;transform:scale(1,.9)">48</div>
<div class="t" style="left:682.4px;top:31.500px;font-size:9.500px;color:#d4d4d4;z-index:3;transform-origin:0 0;transform:scale(1,.9)">54</div>
<div class="t" style="left:741.1px;top:31.500px;font-size:9.500px;color:#d4d4d4;z-index:3;transform-origin:0 0;transform:scale(1,.9)">60</div>
<div class="t" style="left:799.8px;top:31.500px;font-size:9.500px;color:#d4d4d4;z-index:3;transform-origin:0 0;transform:scale(1,.9)">66</div>
<div class="t" style="left:858.5px;top:31.500px;font-size:9.500px;color:#d4d4d4;z-index:3;transform-origin:0 0;transform:scale(1,.9)">72</div>
<div class="t" style="left:917.1px;top:31.500px;font-size:9.500px;color:#d4d4d4;z-index:3;transform-origin:0 0;transform:scale(1,.9)">78</div>
<div class="t" style="left:975.8px;top:31.500px;font-size:9.500px;color:#d4d4d4;z-index:3;transform-origin:0 0;transform:scale(1,.9)">84</div>
<div class="t" style="left:1034.5px;top:31.500px;font-size:9.500px;color:#d4d4d4;z-index:3;transform-origin:0 0;transform:scale(1,.9)">90</div>
<div class="t" style="left:1093.2px;top:31.500px;font-size:9.500px;color:#d4d4d4;z-index:3;transform-origin:0 0;transform:scale(1,.9)">96</div>
<div class="t" style="left:1151.9px;top:31.500px;font-size:9.500px;color:#d4d4d4;z-index:3;transform-origin:0 0;transform:scale(1,.9)">102</div>
<div class="t" style="left:1210.5px;top:31.500px;font-size:9.500px;color:#d4d4d4;z-index:3;transform-origin:0 0;transform:scale(1,.9)">108</div>
<div class="t" style="left:1269.800px;top:31.500px;font-size:9.500px;color:#d4d4d4;transform-origin:0 0;transform:scale(1,.9)">11</div>
<div class="a" style="left:151.800px;top:42.500px;width:1128.200px;height:131.500px;background:#373737"></div>
<div class="a" style="left:1138px;top:42.500px;width:142px;height:99px;background:#333;background-image:repeating-linear-gradient(90deg,#2e2e2e 0 1px,#0000 1px 39px);"></div>
<div class="a" style="left:162.300px;top:122.500px;width:976px;height:18.500px;background:#3d454b;background-image:repeating-linear-gradient(90deg,#384046 0 1px,#0000 1px 19.540px)"></div>
<div class="a" style="left:1138px;top:122.500px;width:142px;height:18.500px;background:#373a3c"></div>
<div class="a" style="left:152px;top:40.800px;width:9.300px;height:100.500px;border:1.300px solid #e6a050;border-bottom:0"></div>
<div class="a" style="left:153.300px;top:42px;width:6.700px;height:22px;background:linear-gradient(#b07c30,#a07430 80%,#6a5030)"></div>
<div class="a" style="left:155px;top:129px;width:3.500px;height:3.500px;border-radius:50%;background:#e09848"></div>
<svg style="left:5px;top:33px" width="10" height="10" stroke="#e0e0e0" stroke-width="1.300"><path d="M0 5h9M4.500 .5v9"/></svg>
<svg style="left:139px;top:33.500px" width="10" height="9" fill="none" stroke="#d0d0d0" stroke-width="1"><rect x=".5" y=".5" width="9" height="8" fill="#555" stroke="none"/><path d="M2 4.500h6M2 4.500l1.500-1.500M2 4.500l1.500 1.500M8 4.500l-1.500-1.500M8 4.500l-1.500 1.500"/></svg>
<div class="a" style="left:0;top:64.2px;width:152.500px;height:1px;background:#3e3e3e"></div>
<svg style="left:5.500px;top:50.0px" width="9" height="9" viewBox="-8 -8 16 16" fill="#d8d8d8"><path d="M1-7l6 5-1.700 1.300-1.300-.5-3.500 3.500.5 2.200-1.300 1.300-2.600-2.600-4.400 4.800-.7-.7 4.800-4.400-2.600-2.600 1.300-1.300 2.200.5 3.500-3.500-.5-1.300z"/></svg>
<div class="t" style="left:18px;top:52.0px;font-size:10px;color:#e0e0e0;transform-origin:0 0;transform:scale(.99,.88)">Paint Layer 2</div>
<svg style="left:88px;top:48.5px" width="64" height="13" viewBox="88 0 64 13" fill="none" stroke="#e0e0e0" stroke-width="1.200"><path d="M89.500 7c1-3.500 3-5 5.500-5s4.500 1.500 5.500 5"/><path d="M90.500 8.500c2 1.800 7 1.800 9 0" stroke-width="1"/><ellipse cx="95" cy="5" rx="2.600" ry="2.400" fill="#e0e0e0" stroke="none"/><g stroke="#7a7a7a" ><rect x="107" y="6" width="10" height="5.500" fill="#7a7a7a" stroke="none"/><path d="M113 6v-2a2 2 0 0 1 3.600-.8"/><path d="M132.500 2.500c-2 4.500-4 7.500-6.500 7.500a2.800 3 0 0 1 0-7c2.800 0 4.500 3 6.500 7" stroke-width="1.300"/></g><g stroke="none"><rect x="137.500" y="0" width="12.500" height="12" fill="#5e5e5e"/><path d="M137.500 0h4.200v4h-4.200zM145.800 0h4.200v4h-4.200zM141.700 4h4.100v4h-4.100zM137.500 8h4.200v4h-4.200zM145.800 8h4.200v4h-4.200z" fill="#7a7a7a"/></g></svg>
<div class="a" style="left:0;top:83.5px;width:152.500px;height:1px;background:#3e3e3e"></div>
<svg style="left:5.500px;top:69.2px" width="9" height="9" viewBox="-8 -8 16 16" fill="#d8d8d8"><path d="M1-7l6 5-1.700 1.300-1.300-.5-3.500 3.500.5 2.200-1.300 1.300-2.600-2.600-4.400 4.800-.7-.7 4.800-4.400-2.600-2.600 1.300-1.300 2.200.5 3.500-3.500-.5-1.300z"/></svg>
<div class="t" style="left:18px;top:71.2px;font-size:10px;color:#e0e0e0;transform-origin:0 0;transform:scale(.99,.88)">bardak1</div>
<svg style="left:88px;top:67.8px" width="64" height="13" viewBox="88 0 64 13" fill="none" stroke="#e0e0e0" stroke-width="1.200"><path d="M89.500 7c1-3.500 3-5 5.500-5s4.500 1.500 5.500 5"/><path d="M90.500 8.500c2 1.800 7 1.800 9 0" stroke-width="1"/><ellipse cx="95" cy="5" rx="2.600" ry="2.400" fill="#e0e0e0" stroke="none"/><g stroke="#7a7a7a" ><rect x="107" y="6" width="10" height="5.500" fill="#7a7a7a" stroke="none"/><path d="M113 6v-2a2 2 0 0 1 3.600-.8"/><path d="M132.500 2.500c-2 4.500-4 7.500-6.500 7.500a2.800 3 0 0 1 0-7c2.800 0 4.500 3 6.500 7" stroke-width="1.300"/></g><g stroke="none"><rect x="137.500" y="0" width="12.500" height="12" fill="#5e5e5e"/><path d="M137.500 0h4.200v4h-4.200zM145.800 0h4.200v4h-4.200zM141.700 4h4.100v4h-4.100zM137.500 8h4.200v4h-4.200zM145.800 8h4.200v4h-4.200z" fill="#7a7a7a"/></g></svg>
<div class="a" style="left:0;top:102.8px;width:152.500px;height:1px;background:#3e3e3e"></div>
<svg style="left:5.500px;top:88.5px" width="9" height="9" viewBox="-8 -8 16 16" fill="#d8d8d8"><path d="M1-7l6 5-1.700 1.300-1.300-.5-3.500 3.500.5 2.200-1.300 1.300-2.600-2.600-4.400 4.800-.7-.7 4.800-4.400-2.600-2.600 1.300-1.300 2.200.5 3.500-3.500-.5-1.300z"/></svg>
<div class="t" style="left:18px;top:90.5px;font-size:10px;color:#e0e0e0;transform-origin:0 0;transform:scale(.99,.88)">çikolata</div>
<svg style="left:88px;top:87.0px" width="64" height="13" viewBox="88 0 64 13" fill="none" stroke="#e0e0e0" stroke-width="1.200"><path d="M89.500 7c1-3.500 3-5 5.500-5s4.500 1.500 5.500 5"/><path d="M90.500 8.500c2 1.800 7 1.800 9 0" stroke-width="1"/><ellipse cx="95" cy="5" rx="2.600" ry="2.400" fill="#e0e0e0" stroke="none"/><g stroke="#7a7a7a" ><rect x="107" y="6" width="10" height="5.500" fill="#7a7a7a" stroke="none"/><path d="M113 6v-2a2 2 0 0 1 3.600-.8"/><path d="M132.500 2.500c-2 4.500-4 7.500-6.500 7.500a2.800 3 0 0 1 0-7c2.800 0 4.500 3 6.500 7" stroke-width="1.300"/></g><g stroke="none"><rect x="137.500" y="0" width="12.500" height="12" fill="#5e5e5e"/><path d="M137.500 0h4.200v4h-4.200zM145.800 0h4.200v4h-4.200zM141.700 4h4.100v4h-4.100zM137.500 8h4.200v4h-4.200zM145.800 8h4.200v4h-4.200z" fill="#7a7a7a"/></g></svg>
<div class="a" style="left:0;top:122.0px;width:152.500px;height:1px;background:#3e3e3e"></div>
<svg style="left:5.500px;top:107.8px" width="9" height="9" viewBox="-8 -8 16 16" fill="#d8d8d8"><path d="M1-7l6 5-1.700 1.300-1.300-.5-3.500 3.500.5 2.200-1.300 1.300-2.600-2.600-4.400 4.800-.7-.7 4.800-4.400-2.600-2.600 1.300-1.300 2.200.5 3.500-3.500-.5-1.300z"/></svg>
<div class="t" style="left:18px;top:109.8px;font-size:10px;color:#e0e0e0;transform-origin:0 0;transform:scale(.99,.88)">kırık effect</div>
<svg style="left:88px;top:106.2px" width="64" height="13" viewBox="88 0 64 13" fill="none" stroke="#e0e0e0" stroke-width="1.200"><path d="M89.500 7c1-3.500 3-5 5.500-5s4.500 1.500 5.500 5"/><path d="M90.500 8.500c2 1.800 7 1.800 9 0" stroke-width="1"/><ellipse cx="95" cy="5" rx="2.600" ry="2.400" fill="#e0e0e0" stroke="none"/><g stroke="#7a7a7a" ><rect x="107" y="6" width="10" height="5.500" fill="#7a7a7a" stroke="none"/><path d="M113 6v-2a2 2 0 0 1 3.600-.8"/><path d="M132.500 2.500c-2 4.500-4 7.500-6.500 7.500a2.800 3 0 0 1 0-7c2.800 0 4.500 3 6.500 7" stroke-width="1.300"/></g><g stroke="none"><rect x="137.500" y="0" width="12.500" height="12" fill="#5e5e5e"/><path d="M137.500 0h4.200v4h-4.200zM145.800 0h4.200v4h-4.200zM141.700 4h4.100v4h-4.100zM137.500 8h4.200v4h-4.200zM145.800 8h4.200v4h-4.200z" fill="#7a7a7a"/></g></svg>
<div class="a" style="left:0;top:122.400px;width:151.800px;height:18px;border:1.200px solid #4d7094;border-left:0;border-right:0"></div>
<svg style="left:5.500px;top:127.0px" width="9" height="9" viewBox="-8 -8 16 16" fill="#d8d8d8"><path d="M1-7l6 5-1.700 1.300-1.300-.5-3.500 3.500.5 2.200-1.300 1.300-2.600-2.600-4.400 4.800-.7-.7 4.800-4.400-2.600-2.600 1.300-1.300 2.200.5 3.500-3.500-.5-1.300z"/></svg>
<div class="t" style="left:18px;top:129.0px;font-size:10px;color:#e0e0e0;transform-origin:0 0;transform:scale(.99,.88)">Paint Layer 3</div>
<svg style="left:88px;top:125.5px" width="64" height="13" viewBox="88 0 64 13" fill="none" stroke="#e0e0e0" stroke-width="1.200"><path d="M89.500 7c1-3.500 3-5 5.500-5s4.500 1.500 5.500 5"/><path d="M90.500 8.500c2 1.800 7 1.800 9 0" stroke-width="1"/><ellipse cx="95" cy="5" rx="2.600" ry="2.400" fill="#e0e0e0" stroke="none"/><g stroke="#7a7a7a" ><rect x="107" y="6" width="10" height="5.500" fill="#7a7a7a" stroke="none"/><path d="M113 6v-2a2 2 0 0 1 3.600-.8"/><path d="M132.500 2.500c-2 4.500-4 7.500-6.500 7.500a2.800 3 0 0 1 0-7c2.800 0 4.500 3 6.500 7" stroke-width="1.300"/></g><g stroke="none"><rect x="137.500" y="0" width="12.500" height="12" fill="#5e5e5e"/><path d="M137.500 0h4.200v4h-4.200zM145.800 0h4.200v4h-4.200zM141.700 4h4.100v4h-4.100zM137.500 8h4.200v4h-4.200zM145.800 8h4.200v4h-4.200z" fill="#7a7a7a"/></g></svg>
<div class="a" style="left:0;top:174px;width:1280px;height:11px;background:#424242"></div>
<div class="a" style="left:12px;top:175px;width:1236px;height:9.500px;background:#474747;border:1px solid #555"></div>
<svg style="left:3px;top:175.500px" width="1276" height="8" fill="#a8a8a8"><path d="M4 0l-4 4 4 4zM1268 0l4 4-4 4z"/></svg>
</div>
<!-- STATUS -->
<div id="status" class="a" style="left:0;top:665px;width:1280px;height:23px">
<svg style="left:6px;top:4.500px" width="14" height="13" fill="none" stroke="#c8c8c8" stroke-width="1"><rect x=".5" y=".5" width="13" height="12"/><ellipse cx="7" cy="6.500" rx="3.500" ry="3.200" stroke-dasharray="1.500 1"/></svg>
<div class="t" style="left:33px;top:7px;font-size:11px;color:#dcdcdc;transform-origin:0 0;transform:scale(.96,.92)">u) Pixel Art Fill</div>
<div class="t" style="left:270px;top:7px;font-size:11px;color:#dcdcdc;transform-origin:0 0;transform:scale(.953,.92)">RGB/Alpha (8-bit integer/channel)&nbsp; sRGB-elle-V2-srgbtrc.icc</div>
<div class="a" style="left:874px;top:2.500px;width:115px;height:18.500px;background:#424242;border:1px solid #3a3a3a;border-radius:2px"></div>
<div class="t" style="left:877.500px;top:7px;font-size:11px;color:#dcdcdc;transform-origin:0 0;transform:scale(.89,.92)">1,920 <u>x</u> 1,080 (22.3 MiB)</div>
<div class="a" style="left:996px;top:3px;width:19px;height:17px;border-radius:50%;background:#333"></div>
<svg style="left:999px;top:8px" width="13" height="7" stroke="#e0e0e0" stroke-width="1" fill="#e0e0e0"><path d="M2 3.500h9"/><circle cx="2" cy="3.500" r="1.200"/><path d="M8.500 1.500l2.500 2-2.500 2z"/></svg>
<div class="t" style="left:1022.500px;top:7px;font-size:11px;color:#dcdcdc;transform-origin:0 0;transform:scale(.84,.92)">0.00°</div>
<div class="t" style="left:1141.500px;top:7px;font-size:11px;color:#dcdcdc;transform-origin:0 0;transform:scale(.88,.92)">66.7%</div>
<div class="a" style="left:1185px;top:10.500px;width:71px;height:2.500px;background:#333"></div>
<div class="a" style="left:1185px;top:10.500px;width:14px;height:2.500px;background:#5f86ad"></div>
<div class="a" style="left:1198.500px;top:6.500px;width:10px;height:10px;background:#4a4a4a;border:1px solid #6a6a6a;border-radius:2px"></div>
<svg style="left:1261px;top:5px" width="15" height="13" fill="none" stroke="#e0e0e0" stroke-width="1.200"><rect x=".6" y=".6" width="13.500" height="8.500"/><path d="M7.400 3v4M5.500 5.500l1.900 1.800 1.900-1.800M7.400 9.500v2M4 12h7"/></svg>
</div>
<div id="taskbar" class="a" style="left:0;top:688px;width:1280px;height:32px;background:#2c2c2c">
<div class="a" style="left:436.500px;top:0;width:43.500px;height:32px;background:#484848"></div>
<div class="a" style="left:50px;top:29.500px;width:32.5px;height:2.500px;background:#8bbce8"></div>
<div class="a" style="left:94px;top:29.500px;width:33.5px;height:2.500px;background:#8bbce8"></div>
<div class="a" style="left:310px;top:29.500px;width:35px;height:2.500px;background:#8bbce8"></div>
<div class="a" style="left:355px;top:29.500px;width:35px;height:2.500px;background:#8bbce8"></div>
<div class="a" style="left:397.5px;top:29.500px;width:35.0px;height:2.500px;background:#8bbce8"></div>
<div class="a" style="left:436.5px;top:29.500px;width:43.5px;height:2.500px;background:#8bbce8"></div>
<div class="a" style="left:484.5px;top:29.500px;width:35.5px;height:2.500px;background:#8bbce8"></div>
<div class="a" style="left:528px;top:29.500px;width:35.5px;height:2.500px;background:#8bbce8"></div>
<div class="a" style="left:571px;top:29.500px;width:36.5px;height:2.500px;background:#8bbce8"></div>
<svg style="left:0;top:0" width="1280" height="32" viewBox="0 688 1280 32">
<path d="M14 699.500l6-.8v5.500h-6zM21 698.500l8-1.200v6.900h-8zM14 705.200h6v5.500l-6-.8zM21 705.200h8v6.900l-8-1.200z" fill="#fff"/>
<path d="M56 699h8l1.500 1.500h10.500v10h-20z" fill="#f4c542"/><path d="M56 703h20v8h-20z" fill="#f8d873"/><path d="M60 706h12v5h-12z" fill="#4a9be8"/>
<circle cx="110" cy="704.500" r="9.500" fill="#5865f2"/><path d="M104 707c0-4 2-6.500 6-6.500s6 2.500 6 6.500c-2 2-10 2-12 0z" fill="#fff"/><circle cx="107.500" cy="705" r="1.300" fill="#5865f2"/><circle cx="112.500" cy="705" r="1.300" fill="#5865f2"/><circle cx="116.500" cy="710.500" r="4" fill="#e0404a"/>
<rect x="145" y="697.500" width="19" height="14" fill="#e8eef6"/><rect x="147" y="700" width="6" height="9" fill="#3a78c8"/><path d="M155 701h7M155 704h7M155 707h7" stroke="#7a8aa0" stroke-width="1"/>
<circle cx="240.5" cy="704.500" r="10" fill="#e8453c"/><path d="M240.5 704.500l-8.700 5a10 10 0 0 0 8.700 5l4.500-7.500z" fill="#2da94f"/><path d="M240.5 704.500l4.500 7.500-4.500 2.500a10 10 0 0 0 8.700-15h-8.700z" fill="#fdbd00"/><circle cx="240.5" cy="704.500" r="4.600" fill="#fff"/><circle cx="240.5" cy="704.500" r="3.600" fill="#4a8af4"/>
<circle cx="414.5" cy="704.500" r="10" fill="#e8453c"/><path d="M414.5 704.500l-8.700 5a10 10 0 0 0 8.700 5l4.500-7.500z" fill="#2da94f"/><path d="M414.5 704.500l4.500 7.500-4.500 2.500a10 10 0 0 0 8.700-15h-8.700z" fill="#fdbd00"/><circle cx="414.5" cy="704.500" r="4.600" fill="#fff"/><circle cx="414.5" cy="704.500" r="3.600" fill="#4a8af4"/>
<circle cx="421" cy="710.500" r="4.500" fill="#c8a070"/>
<rect x="275" y="695" width="19" height="18" rx="2" fill="#06065a"/>
<circle cx="328" cy="704.500" r="10.500" fill="#1ed760"/><path d="M322 701c4-1.200 9-.8 12.500 1.200M322.500 704.500c3.500-1 7.500-.6 10.500 1M323.500 708c3-.8 6-.5 8.500.8" stroke="#1a1a1a" stroke-width="1.600" fill="none" stroke-linecap="round"/>
<path d="M362.500 700l10-5 10 5v9l-10 5-10-5z" fill="#1b2838"/><circle cx="372.500" cy="704.500" r="3.500" fill="#c8d4e0"/><path d="M369 698v13" stroke="#8aa0b8" stroke-width="1.500"/>
<circle cx="458.500" cy="703.800" r="9.300" fill="#f4f4f8"/><path d="M458.500 703.800L449.500 701a9.300 9.300 0 0 1 14-5.500z" fill="#e040d8"/><path d="M458.500 703.800L463.500 695.500a9.300 9.300 0 0 1 4.300 9.300z" fill="#f8e060"/><path d="M458.500 703.800L467.800 704.800a9.300 9.300 0 0 1-9.300 8.300 9.300 9.300 0 0 1-9.300-9.300l.3-2.800z" fill="#48d8f0"/><circle cx="459" cy="704.500" r="4.500" fill="#f0f0f8" opacity=".75"/><path d="M451.500 697.500l8.500 7" stroke="#281c50" stroke-width="2.200"/><circle cx="461" cy="705.500" r="1.800" fill="#181830"/>
<rect x="494" y="696" width="15" height="17" rx="4" fill="#3a3a3a"/><circle cx="501.500" cy="702" r="4" fill="#585858"/>
<circle cx="545" cy="704.500" r="10" fill="#222" stroke="#d8d8d8" stroke-width="1.500"/><path d="M540 700a5 5 0 0 1 8-1M551 704a5 5 0 0 1-5 6M542 711a5 5 0 0 1-3-7" stroke="#d8d8d8" stroke-width="1.800" fill="none"/><circle cx="552" cy="710.500" r="4.500" fill="#e81123"/>
<rect x="578" y="694" width="22" height="21" fill="#d8102c"/><path d="M584 700h10v10l-3-3v-4h-4zM584 703.500l3 0v4h4l0 3h-7z" fill="#fff"/>
<g fill="none" stroke="#fff" stroke-width="1.300"><path d="M1094 707l5-4.500 5 4.500"/><rect x="1116.500" y="699.500" width="10" height="7"/><path d="M1113 701.500v7h4M1119 710h5M1121.500 706.500v3.500" stroke-width="1.100"/><path d="M1135 702.500h2.500l3.500-3v10.500l-3.500-3h-2.500z" stroke-width="1.100"/><path d="M1143 702a4 4 0 0 1 0 5.500M1145.500 700a7 7 0 0 1 0 9.500" stroke-width="1"/><rect x="1160" y="697.500" width="5" height="9" rx="2.500" fill="#fff"/><path d="M1158 704.500a4.500 4.500 0 0 0 9 0M1162.500 709v2.500M1160 711.500h5" stroke-width="1.100"/><path d="M1243.500 698.500h14v9.500h-8l-3 3v-3h-3z" stroke-width="1.200"/><path d="M1246 701.500h9M1246 704.500h9" stroke-width="1"/></g>
<circle cx="1257.500" cy="710.500" r="5" fill="#2c2c2c" stroke="#fff" stroke-width="1"/>
<path d="M1276.500 688v32" stroke="#6a6a6a" stroke-width="1"/>
</svg>
<div class="t" style="left:278.500px;top:11.500px;font-size:10px;font-weight:700;color:#e8a0ff">Pr</div>
<div class="t" style="left:1173px;top:3px;width:60px;text-align:center;font-size:11px;color:#fff;transform:scale(.92,.9)">09:53</div>
<div class="t" style="left:1173px;top:18px;width:60px;text-align:center;font-size:11px;color:#fff;transform:scale(.92,.9)">17.11.2025</div>
<div class="t" style="left:1255px;top:18.500px;font-size:8px;font-weight:700;color:#fff">2</div>
<div class="t" style="left:114.500px;top:18.500px;font-size:7.500px;font-weight:700;color:#fff">1</div>
</div>
</body>
</html>
